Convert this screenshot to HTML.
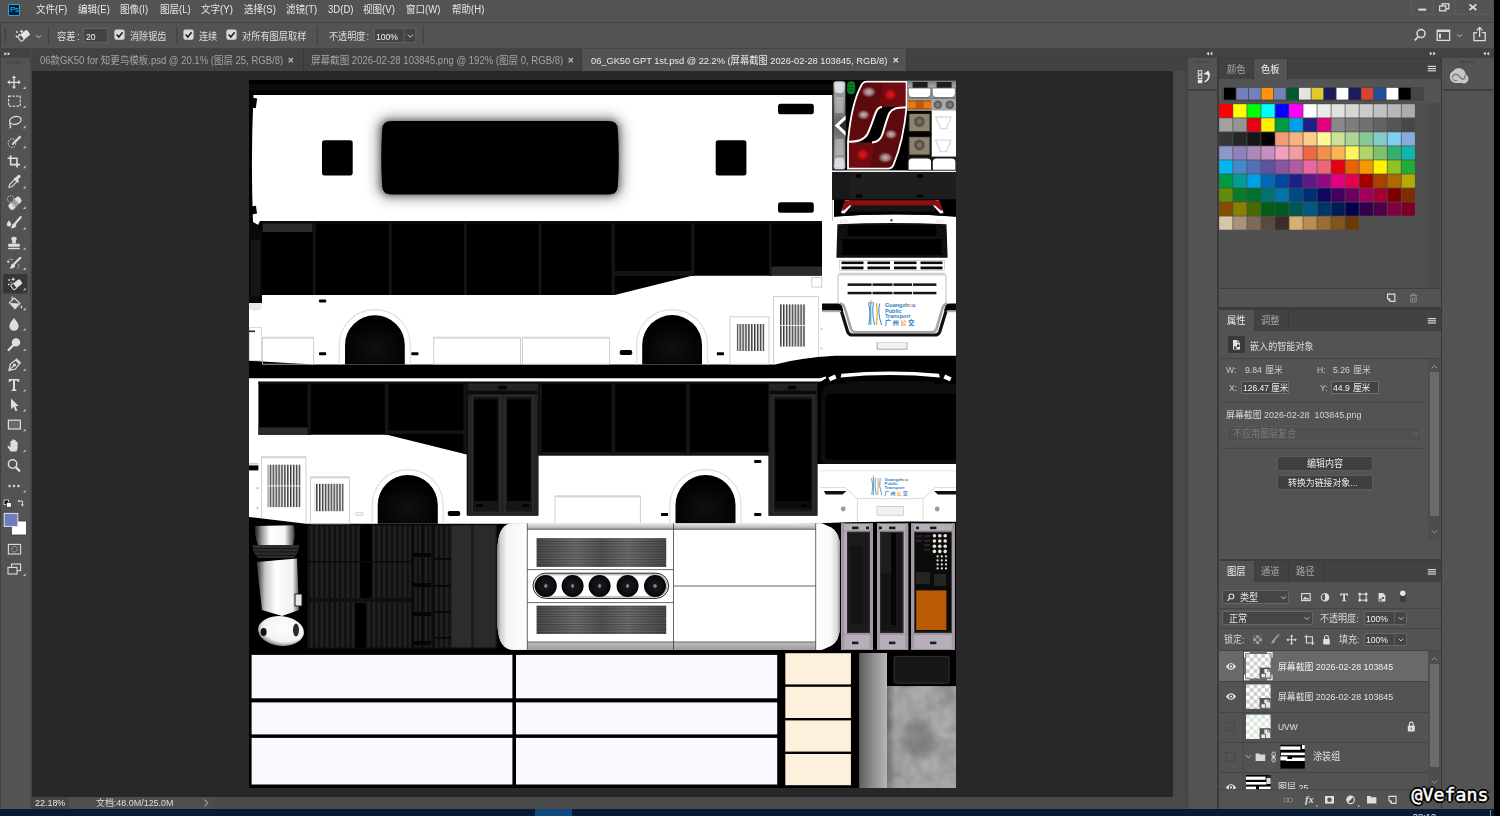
<!DOCTYPE html>
<html lang="zh-CN">
<head>
<meta charset="utf-8">
<title>Photoshop</title>
<style>
*{box-sizing:border-box;margin:0;padding:0}
html,body{width:1500px;height:816px;overflow:hidden;background:#535353}
body{position:relative;font-family:"Liberation Sans","Noto Sans CJK SC",sans-serif;font-size:10.5px;color:#dcdcdc;line-height:1}
.abs{position:absolute}
.t{position:absolute;white-space:pre;line-height:12px;height:12px}
/* ---------- top bars ---------- */
#menubar{left:0;top:0;width:1494px;height:22.7px;background:#535353;border-bottom:1px solid #424242}
#optbar{left:0;top:22.7px;width:1494px;height:25.9px;background:#535353;border-bottom:0.8px solid #444}
#menubar .t{top:4px;font-size:10.5px;color:#e4e4e4}
.sep{position:absolute;width:1px;background:#3c3c3c;top:27px;height:17px}
.cb{position:absolute;top:30px;width:10px;height:10px;background:#d6d6d6;border-radius:1.5px}
.cb svg{position:absolute;left:1px;top:1px}
.inp{position:absolute;background:#454545;border:1px solid #666;color:#f0f0f0}
/* ---------- tab bar ---------- */
#tabbar{left:32px;top:48.6px;width:1141px;height:22.6px;background:#424242}
.tab{position:absolute;top:0;height:22px;border-right:1px solid #383838;color:#9c9c9c}
.tab.on{background:#535353;color:#e6e6e6}
.tab .t{top:5px;font-size:10px}
/* ---------- toolbar ---------- */
#tools{left:0;top:48.6px;width:30px;height:760px;background:#535353}
#toolsdiv{left:30px;top:48.6px;width:2px;height:760px;background:#464646}
/* ---------- canvas ---------- */
#stage{left:32px;top:71.2px;width:1141px;height:725.4px;background:#282828}
#vscroll{left:1173px;top:71.2px;width:13px;height:725.4px;background:#494949}
#status{left:32px;top:796.6px;width:1154px;height:12.6px;background:#4a4a4a}
#taskbar{left:0;top:809px;width:1494px;height:7px;background:#051b38}
/* ---------- right dock ---------- */
#dockgap{left:1186px;top:48.6px;width:2px;height:760px;background:#434343}
#dockhead{left:1188px;top:48.6px;width:306px;height:9.4px;background:#424242}
#iconcol{left:1188px;top:58px;width:29px;height:751px;background:#535353}
#panelcol{left:1217px;top:58px;width:225px;height:751px;background:#3c3c3c}
#cccol{left:1440.5px;top:58px;width:53.5px;height:751px;background:#535353;border-left:1px solid #383838}
#rightedge{left:1494px;top:0;width:6px;height:816px;background:#000}
.panel{position:absolute;left:1219px;width:221px;background:#535353}
.ptabs{position:absolute;left:0;top:0;width:100%;height:21px;background:#424242}
.ptab{position:absolute;top:0;height:21px;color:#a8a8a8;font-size:10.5px}
.ptab.on{background:#535353;color:#f0f0f0}
.ptab span{position:absolute;top:5px;left:8px;white-space:nowrap;line-height:12px}
</style>
</head>
<body>
<!-- ============ MENU BAR ============ -->
<div id="menubar" class="abs"></div>
<!-- ============ OPTIONS BAR ============ -->
<div id="optbar" class="abs"></div>
<!-- ============ TOOLBAR ============ -->
<div id="tools" class="abs"></div>
<div id="toolsdiv" class="abs"></div>
<!-- ============ TAB BAR ============ -->
<div id="tabbar" class="abs"></div>
<!-- ============ CANVAS STAGE ============ -->
<div id="stage" class="abs"></div>
<div id="vscroll" class="abs"></div>
<div id="status" class="abs"></div>
<!-- ============ RIGHT DOCK ============ -->
<div id="dockgap" class="abs"></div>
<div id="dockhead" class="abs"></div>
<div id="iconcol" class="abs"></div>
<div id="panelcol" class="abs"></div>
<div id="cccol" class="abs"></div>
<div id="rightedge" class="abs"></div>
<div id="taskbar" class="abs"></div>
<div class="abs" style="left:0;top:22px;width:1px;height:787px;background:#404040"></div>
<svg class="abs" style="left:0;top:0" width="1500" height="816" viewBox="0 0 1500 816">
<defs>
  <filter id="b1" x="-10%" y="-20%" width="120%" height="140%"><feGaussianBlur stdDeviation="1.6"/></filter>
  <filter id="b05" x="-10%" y="-20%" width="120%" height="140%"><feGaussianBlur stdDeviation="0.6"/></filter>
  <filter id="b7" x="-20%" y="-40%" width="140%" height="180%"><feGaussianBlur stdDeviation="6.5"/></filter>
  <filter id="b3" x="-20%" y="-20%" width="140%" height="140%"><feGaussianBlur stdDeviation="3"/></filter>
  <filter id="conc" x="0" y="0" width="100%" height="100%">
    <feTurbulence type="fractalNoise" baseFrequency="0.045" numOctaves="3" seed="7" result="n"/>
    <feColorMatrix in="n" type="matrix" values="0 0 0 0 0.52  0 0 0 0 0.52  0 0 0 0 0.52  0.9 0.9 0 0 -0.55" result="m"/>
    <feComposite in="m" in2="SourceGraphic" operator="over"/>
  </filter>
  <linearGradient id="concL" x1="0" x2="1" y1="0" y2="0"><stop offset="0" stop-color="#000" stop-opacity="0.3"/><stop offset="1" stop-color="#000" stop-opacity="0"/></linearGradient>
  <linearGradient id="gcol" x1="0" x2="1" y1="0" y2="0">
    <stop offset="0" stop-color="#5e5e5e"/><stop offset="0.5" stop-color="#8e8e8e"/><stop offset="1" stop-color="#b6b6b6"/>
  </linearGradient>
  <linearGradient id="acL" x1="0" x2="1" y1="0" y2="0">
    <stop offset="0" stop-color="#888888"/><stop offset="0.1" stop-color="#cecece"/><stop offset="0.32" stop-color="#f4f4f4"/><stop offset="1" stop-color="#ffffff"/>
  </linearGradient>
  <linearGradient id="acR" x1="0" x2="1" y1="0" y2="0">
    <stop offset="0" stop-color="#ffffff"/><stop offset="0.6" stop-color="#f8f8f8"/><stop offset="0.88" stop-color="#d8d8d8"/><stop offset="1" stop-color="#909090"/>
  </linearGradient>
  <linearGradient id="acT" x1="0" x2="0" y1="0" y2="1">
    <stop offset="0" stop-color="#ececec"/><stop offset="1" stop-color="#a4a4a4"/>
  </linearGradient>
  <linearGradient id="acB" x1="0" x2="0" y1="0" y2="1">
    <stop offset="0" stop-color="#c0c0c0"/><stop offset="1" stop-color="#9c9c9c"/>
  </linearGradient>
  <linearGradient id="grl" x1="0" x2="1" y1="0" y2="0">
    <stop offset="0" stop-color="#4e4e4e"/><stop offset="0.12" stop-color="#5c5c5c"/><stop offset="0.3" stop-color="#727272"/><stop offset="0.5" stop-color="#585858"/><stop offset="0.7" stop-color="#727272"/><stop offset="0.88" stop-color="#5c5c5c"/><stop offset="1" stop-color="#4e4e4e"/>
  </linearGradient>
  <pattern id="hatch" width="10" height="2.6" patternUnits="userSpaceOnUse"><rect width="10" height="1.2" fill="#000" opacity="0.3"/></pattern>
  <pattern id="ribs" width="5.2" height="10" patternUnits="userSpaceOnUse" x="309"><rect width="5.2" height="10" fill="#101010"/><rect x="1.2" width="2.6" height="10" fill="#222222"/></pattern>
  <pattern id="bars" width="2.9" height="10" patternUnits="userSpaceOnUse"><rect width="2.9" height="10" fill="#fff"/><rect width="1.5" height="10" fill="#3a3a3a"/></pattern>
  <radialGradient id="fan"><stop offset="0" stop-color="#8a8a8a"/><stop offset="0.14" stop-color="#777"/><stop offset="0.18" stop-color="#16181d"/><stop offset="0.8" stop-color="#0b0c10"/><stop offset="1" stop-color="#000"/></radialGradient>
  <radialGradient id="arch" cx="0.5" cy="0.7" r="0.6"><stop offset="0" stop-color="#101010"/><stop offset="1" stop-color="#000"/></radialGradient>
</defs>
<!-- document black base -->
<rect x="249" y="80" width="707" height="708" fill="#000"/>
<!-- ROOF -->
<rect x="249" y="84" width="707" height="6" fill="#0b0b0b"/>
<path d="M253.5,95 L832.5,95 L832.5,221 L260,221 L258,225 L253,222 Q250.6,158 253.5,95 Z" fill="#fff"/>
<rect x="251.5" y="98" width="5" height="10" fill="#000" transform="rotate(8 254 103)"/>
<rect x="251.5" y="206" width="5" height="8" fill="#000" transform="rotate(-8 254 210)"/>
<rect x="376" y="116" width="247.5" height="83.5" rx="14" fill="#000" filter="url(#b7)" opacity="0.3"/>
<rect x="380" y="120" width="239.5" height="75.5" rx="10" fill="#000" filter="url(#b3)" opacity="0.45"/>
<path d="M391,121 L609,121 Q617.2,121 617.8,129 Q619.8,158 617.8,186.5 Q617.2,194.5 609,194.5 L391,194.5 Q382.8,194.5 382.2,186.5 Q380.2,158 382.2,129 Q382.8,121 391,121 Z" fill="#000" filter="url(#b05)"/>
<rect x="322" y="140.3" width="30.7" height="35.2" rx="2.5" fill="#000"/>
<rect x="715.7" y="140.3" width="30.7" height="35.2" rx="2.5" fill="#000"/>
<rect x="778" y="103.8" width="35.8" height="10.4" rx="2.5" fill="#000" filter="url(#b05)"/>
<rect x="778" y="202.3" width="35.8" height="10.4" rx="2.5" fill="#000" filter="url(#b05)"/>

<!-- SIDE 1 -->
<path d="M249,303 L262,303 L262,295 L614.7,295 L692,275.8 L822,275.8 L822,221 L832.5,221 L832.5,200 L834,200 L834,216.5 Q895,211.5 956,216.5 L956,355.8 L835,355.8 Q800,358 775,364.4 L313.5,364.4 L249,360.8 Z" fill="#fff"/>
<!-- window frame tints -->
<rect x="262" y="221" width="560" height="2.5" fill="#0d0d0d"/>
<rect x="262.5" y="223.5" width="50" height="8.5" fill="#2b2b2b"/>
<g fill="#141414">
<rect x="312.8" y="223" width="3" height="72"/><rect x="388.8" y="223" width="3" height="72"/><rect x="463.8" y="223" width="3" height="72"/><rect x="538.6" y="223" width="3" height="72"/><rect x="611.5" y="223" width="3.4" height="72"/><rect x="691" y="223" width="3.4" height="53"/><rect x="769" y="223" width="2.4" height="53"/>
<rect x="614" y="271" width="78" height="5"/>
</g>
<rect x="771.4" y="266.5" width="50.4" height="8.5" fill="#2b2b2b"/>
<path d="M249,222 L258,225 L261.8,232 L261.8,303 L249,303 Z" fill="#0a0a0a"/>
<path d="M251,240 L260,240 L260,296 L251,296 Z" fill="#161616"/>
<path d="M249,303 L261.5,303 L261.5,309 Q256,312 249,309 Z" fill="#e9e9e9"/>
<rect x="249.3" y="327.5" width="12" height="33" fill="none" stroke="#c9c9c9" stroke-width="0.7"/>
<rect x="249" y="330.5" width="6" height="1.6" fill="#222"/>
<!-- wheel arches -->
<path d="M339.3,364.4 L339.3,345 A35.5,35.5 0 0 1 410.3,345 L410.3,364.4" fill="none" stroke="#e2e2e2" stroke-width="1.3"/>
<path d="M345,364.4 L345,345 A29.9,29.9 0 0 1 404.8,345 L404.8,364.4 Z" fill="url(#arch)"/>
<path d="M636.6,364.4 L636.6,345 A35.5,35.5 0 0 1 707.6,345 L707.6,364.4" fill="none" stroke="#e2e2e2" stroke-width="1.3"/>
<path d="M642.2,364.4 L642.2,345 A29.9,29.9 0 0 1 702,345 L702,364.4 Z" fill="url(#arch)"/>
<!-- panel outlines -->
<g fill="none" stroke="#c4c4c4" stroke-width="0.8">
<rect x="262.4" y="337.2" width="51.3" height="27"/><rect x="433.8" y="337.2" width="86.8" height="27"/><rect x="522.6" y="337.2" width="86.8" height="27"/>
<rect x="730" y="316.8" width="39" height="47.4"/><path d="M773.6,364.4 L773.6,296.5 L818.6,296.5 L818.6,357"/>
<rect x="811.8" y="277.4" width="10" height="9.6"/>
</g>
<rect x="433.5" y="337" width="87" height="1.6" fill="#d8d8d8"/><rect x="522.4" y="337" width="87" height="1.6" fill="#d8d8d8"/><rect x="262.4" y="337" width="51.3" height="1.6" fill="#d8d8d8"/>
<!-- small marks -->
<g fill="#000"><rect x="319" y="299.6" width="7.2" height="3" rx="0.8"/><rect x="319" y="352.2" width="7.2" height="3" rx="0.8"/><rect x="411.3" y="352.2" width="7.2" height="3" rx="0.8"/><rect x="716.8" y="352.2" width="7.2" height="3" rx="0.8"/><rect x="619.8" y="350" width="12.4" height="5" rx="1.8"/></g>
<!-- grilles -->
<rect x="736.8" y="324" width="27.6" height="27" fill="url(#bars)"/>
<rect x="779.7" y="304.4" width="25.6" height="42.2" fill="url(#bars)"/>
<rect x="779.7" y="325" width="25.6" height="1" fill="#fff" opacity="0.8"/>
<circle cx="821.6" cy="329" r="1.1" fill="#ccc"/><circle cx="821.6" cy="348.5" r="1.1" fill="#ccc"/>

<!-- FRONT 1 -->
<rect x="832.2" y="172" width="123.8" height="27.6" fill="#1e1e1e"/>
<rect x="832.2" y="172" width="18" height="27.6" fill="#191919"/><rect x="856" y="174" width="5" height="3.5" fill="#000"/><rect x="917" y="174" width="6" height="3.5" fill="#000"/><rect x="856" y="194.5" width="6" height="3" fill="#000"/><rect x="917" y="194.5" width="6" height="3" fill="#000"/>
<rect x="834" y="199.6" width="122" height="15" fill="#000"/>
<path d="M834,216.8 Q895,211.3 956,216.8 L956,212 L834,212 Z" fill="#000"/>
<rect x="849" y="205.6" width="86" height="6" fill="#151515"/>
<path d="M845.5,200 L841,213 L844.5,213.4 L851.5,205.5 L849,200 Z" fill="#fff"/>
<path d="M938.5,200 L943.6,213 L940.2,213.4 L933,205.5 L936,200 Z" fill="#fff"/>
<path d="M844.6,200.3 L939.6,200.3 L942.6,210.5 L940.8,210.5 L935,205.4 L849.5,205.4 L844,210.5 L842,210.5 Z" fill="#8a0f12"/>
<!-- windshield -->
<path d="M837.4,224.2 Q892,221.6 946.5,224.2 L947.6,257.8 L836.4,257.8 Z" fill="#101010"/>
<rect x="847.8" y="225.2" width="88.4" height="10.8" fill="#000"/>
<rect x="842.3" y="239" width="99.3" height="16" fill="#000"/>
<circle cx="891.5" cy="220.2" r="1.3" fill="#555"/>
<rect x="840.5" y="220.5" width="6" height="2.4" fill="none" stroke="#d0d0d0" stroke-width="0.6" transform="rotate(-8 843 221)"/><rect x="937" y="220.5" width="6" height="2.4" fill="none" stroke="#d0d0d0" stroke-width="0.6" transform="rotate(8 940 221)"/>
<!-- grill -->
<g fill="#0c0c0c"><rect x="841.5" y="261.5" width="22" height="2.6"/><rect x="867.5" y="261.5" width="22.5" height="2.6"/><rect x="894" y="261.5" width="22.5" height="2.6"/><rect x="920.5" y="261.5" width="22" height="2.6"/>
<rect x="841.5" y="266.5" width="22" height="2.8"/><rect x="867.5" y="266.5" width="22.5" height="2.8"/><rect x="894" y="266.5" width="22.5" height="2.8"/><rect x="920.5" y="266.5" width="22" height="2.8"/></g>
<rect x="839.5" y="260.3" width="105" height="10.2" fill="none" stroke="#bbb" stroke-width="0.6"/>
<path d="M838,304 L838,276 Q838,273.4 841,273.4 L943,273.4 Q946,273.4 946,276 L946,304" fill="none" stroke="#bdbdbd" stroke-width="1"/>
<rect x="838.5" y="273.6" width="107" height="2" fill="#d5d5d5"/>
<g fill="#151515"><rect x="847.6" y="283.4" width="88.8" height="2.5"/><rect x="847.6" y="291.8" width="88.8" height="2.5"/></g>
<g fill="#fff"><rect x="871.6" y="283" width="0.9" height="12"/><rect x="892.5" y="283" width="0.9" height="12"/><rect x="912" y="283" width="0.9" height="12"/></g>
<!-- bumper swoosh -->
<path d="M839.6,303.6 Q843.6,304 844.8,308 L851,329 Q852,332.2 855.4,332.2 L932,332.2 Q935.4,332.2 936.4,329 L942.6,308 Q943.8,304 947.8,303.6" fill="none" stroke="#a4a4a4" stroke-width="2.6"/>
<path d="M822,307 L836.5,307 Q840,307 841.2,310.5 L847.6,331.4 Q848.8,335 852.8,335 L934.6,335 Q938.6,335 939.8,331.4 L946.2,310.5 Q947.4,307 951,307 L956,307" fill="none" stroke="#101010" stroke-width="3.2"/>
<path d="M822,303.6 L838,303.6 Q841.4,304 842.4,307.4 L843.4,310.6 L822,310.6 Z" fill="#050505"/>
<path d="M956,303.6 L949.4,303.6 Q946,304 945,307.4 L944,310.6 L956,310.6 Z" fill="#050505"/>
<rect x="822" y="310.6" width="19" height="1.6" fill="#b0b0b0"/><rect x="946.6" y="310.6" width="9.4" height="1.6" fill="#b0b0b0"/>
<!-- logo -->
<g>
<path d="M868.6,303.5 Q871,312 868.8,325 M870.8,302.5 L870.8,325 M873.4,303.5 Q871.6,312 874.6,325 M879.6,303.5 Q877.4,313 881.6,325" fill="none" stroke="#3d86c6" stroke-width="1"/>
<path d="M876.6,303.2 Q877.8,313 876.4,325" fill="none" stroke="#f0a030" stroke-width="1.2"/>
<circle cx="870.8" cy="300.8" r="0.9" fill="#f0a030"/><rect x="868" y="302.4" width="6" height="0.9" fill="#3d86c6"/>
<text font-family="'Liberation Sans','Noto Sans CJK SC',sans-serif" font-weight="bold" font-size="5.5" fill="#2f7dc2"><tspan x="885" y="307.2">Guangzh<tspan fill="#f0a030">o</tspan>u</tspan><tspan x="885" y="312.7">Public</tspan><tspan x="885" y="318.2">Transport</tspan></text>
<text font-family="'Noto Sans CJK SC',sans-serif" font-weight="bold" font-size="6.4" letter-spacing="1.3" x="884.8" y="325.4" fill="#2f7dc2">广州<tspan fill="#f0a030">公</tspan>交</text>
</g>
<!-- plate -->
<rect x="876.6" y="342" width="31" height="8" fill="#bdbdbd" filter="url(#b05)"/><rect x="878" y="342.4" width="28.4" height="6.2" fill="#f1f1f1"/>

<!-- SIDE 2 -->
<path d="M840.6,377.4 Q890,372.6 939.8,377.4 L939,373.8 Q890,369.2 841.4,373.8 Z" fill="#fff"/>
<path d="M828.4,377.4 L834.8,374.6 L836.6,378.4 L830.2,381.2 Z" fill="#fff"/><path d="M951.6,377.4 L945.2,374.6 L943.4,378.4 L949.8,381.2 Z" fill="#fff"/>
<path d="M249,378.2 L820,378.2 L825.6,376.4 L826.4,378 L821,381.6 L258.4,381.6 L258.4,434.8 L387,434.8 L466.7,454.6 L466.7,515.6 L538.5,515.6 L538.5,455.4 L768.6,455.4 L768.6,515.6 L817.4,515.6 L817.4,464 L956,464 L956,521.8 Q880,521 840,522.6 Q800,524.4 760,523.7 L306,523.7 L249,517 Z" fill="#fff"/>
<rect x="258.4" y="382" width="560" height="2.2" fill="#0d0d0d"/>
<rect x="258.4" y="427.4" width="50" height="7.4" fill="#2b2b2b"/>
<g fill="#141414">
<rect x="307.6" y="384" width="3.2" height="51"/><rect x="385" y="384" width="3.4" height="51"/><rect x="388" y="430.5" width="76" height="3.4"/><rect x="463.5" y="384" width="3.2" height="70"/>
<rect x="538.5" y="384" width="3.2" height="71"/><rect x="611.6" y="384" width="3.6" height="71"/><rect x="686.2" y="384" width="3.6" height="71"/>
<rect x="538.5" y="452" width="230" height="3.4"/>
</g>
<!-- door 1 -->
<rect x="467.6" y="383.4" width="70.4" height="132.4" fill="#232323"/>
<rect x="468" y="390.6" width="69" height="3.6" fill="#0a0a0a"/><rect x="498" y="385.8" width="9" height="3.6" rx="1.6" fill="#050505"/>
<rect x="471.6" y="395" width="28.8" height="118" fill="#2e2e2e"/><rect x="504.6" y="395" width="28.8" height="118" fill="#2e2e2e"/>
<rect x="473" y="396.6" width="26" height="115" fill="#161616"/><rect x="506" y="396.6" width="26" height="115" fill="#161616"/>
<rect x="474.4" y="399.4" width="23" height="101.6" fill="#000"/><rect x="507.4" y="399.4" width="23" height="101.6" fill="#000"/>
<rect x="476" y="504.2" width="7" height="2.6" fill="#000"/><rect x="522" y="504.2" width="7" height="2.6" fill="#000"/>
<!-- door 2 -->
<rect x="768.6" y="383.4" width="48.8" height="132.4" fill="#232323"/>
<rect x="769.5" y="390.6" width="47" height="3.4" fill="#0a0a0a"/><rect x="787.6" y="385.8" width="9" height="3.6" rx="1.6" fill="#050505"/>
<rect x="772.4" y="395" width="41.4" height="118" fill="#2e2e2e"/><rect x="773.8" y="396.6" width="38.6" height="115" fill="#161616"/>
<rect x="775.4" y="399.4" width="35.8" height="102" fill="#000"/><rect x="775.4" y="501.4" width="35.8" height="7" fill="#0b0b0b"/>
<rect x="800.6" y="504.2" width="6" height="2.6" fill="#000"/>
<!-- left details -->
<rect x="249" y="465.4" width="9.4" height="5" fill="#000"/><rect x="249" y="463.4" width="9.4" height="1" fill="#aaa"/>
<circle cx="257.6" cy="488.2" r="1.1" fill="#bbb"/><circle cx="257.6" cy="507.8" r="1.1" fill="#bbb"/>
<g fill="none" stroke="#c4c4c4" stroke-width="0.8">
<path d="M261.6,518.2 L261.6,456.8 L306,456.8 L306,523.4"/><rect x="310.6" y="477" width="39" height="47"/>
<path d="M555,523.7 L555,496 L640.4,496 L640.4,523.7"/>
<rect x="355.8" y="512.8" width="7" height="2.6" rx="0.6"/>
</g>
<rect x="261.6" y="456.4" width="44.4" height="1.8" fill="#d4d4d4"/><rect x="310.6" y="476.6" width="39" height="1.8" fill="#d4d4d4"/><rect x="555" y="495.6" width="85.4" height="1.8" fill="#d4d4d4"/>
<rect x="267.7" y="464.7" width="33" height="42.4" fill="url(#bars)"/><rect x="267.7" y="485.4" width="33" height="1" fill="#fff" opacity="0.8"/>
<rect x="314.8" y="483.8" width="28.8" height="27.4" fill="url(#bars)"/>
<!-- wheel arches -->
<path d="M372.2,523.7 L372.2,505 A35.5,35.5 0 0 1 443.2,505 L443.2,523.7" fill="none" stroke="#e2e2e2" stroke-width="1.3"/>
<path d="M377.7,523.7 L377.7,505 A30,30 0 0 1 437.8,505 L437.8,523.7 Z" fill="url(#arch)"/>
<path d="M670,523.7 L670,505 A35.5,35.5 0 0 1 741,505 L741,523.7" fill="none" stroke="#e2e2e2" stroke-width="1.3"/>
<path d="M675.5,523.7 L675.5,505 A30,30 0 0 1 735.5,505 L735.5,523.7 Z" fill="url(#arch)"/>
<g fill="#000"><rect x="447.8" y="511" width="12.4" height="5" rx="1.8"/><rect x="754.2" y="460" width="7.2" height="3" rx="0.8"/><rect x="661" y="513" width="7.2" height="3" rx="0.8"/><rect x="754.2" y="513" width="7.2" height="3" rx="0.8"/></g>

<!-- FRONT 2 -->
<path d="M821.4,395 Q822,386 830,384.2 L956,384.2 L956,464 L824,464 Q820.6,462 820.8,458 Z" fill="#0d0d0d"/>
<path d="M825.4,398 Q826,394 830,394 L956,394 L956,459.6 L829,459.6 Q825,459.6 825,455.6 Z" fill="#000"/>
<rect x="845.6" y="381.2" width="89" height="10.4" fill="#0d0d0d"/>
<path d="M819,470.8 L956,470.8" stroke="#e6e6e6" stroke-width="1"/>
<path d="M820,487.6 L845.5,487.6 L857.4,498.4 L857.4,521.8 M956,487.6 L935,487.6 L923,498.4 L923,521.8 M857.4,498.6 L923,498.6" fill="none" stroke="#cfcfcf" stroke-width="0.8"/>
<path d="M824,491 L846.4,491 L842.6,494.4 L825.6,494.4 Z" fill="#111"/><path d="M956,491 L934,491 L937.8,494.4 L956,494.4 Z" fill="#111"/>
<circle cx="843.2" cy="509" r="2.4" fill="#9a9a9a"/><circle cx="937.2" cy="509" r="2.4" fill="#9a9a9a"/>
<rect x="877" y="506.6" width="26.4" height="8.6" fill="#f1f1f1" stroke="#bfbfbf" stroke-width="0.7"/>
<g>
<path d="M871.6,478 Q873.6,485 871.8,495 M873.4,477 L873.4,495 M875.4,478 Q874,485 876.4,495 M880.2,478 Q878.4,486 881.8,495" fill="none" stroke="#3d86c6" stroke-width="0.8"/>
<path d="M877.8,477.8 Q878.8,486 877.6,495" fill="none" stroke="#f0a030" stroke-width="0.9"/><circle cx="873.4" cy="476" r="0.7" fill="#f0a030"/>
<text font-family="'Liberation Sans','Noto Sans CJK SC',sans-serif" font-weight="bold" font-size="4.3" fill="#2f7dc2"><tspan x="884.6" y="481.2">Guangzh<tspan fill="#f0a030">o</tspan>u</tspan><tspan x="884.6" y="485.2">Public</tspan><tspan x="884.6" y="489.2">Transport</tspan></text>
<text font-family="'Noto Sans CJK SC',sans-serif" font-weight="bold" font-size="5" letter-spacing="1.1" x="884.4" y="495" fill="#2f7dc2">广州<tspan fill="#f0a030">公</tspan>交</text>
</g>

<!-- ROW 3 -->
<!-- mirror / exhaust object -->
<defs>
<linearGradient id="cyl" x1="0" x2="1" y1="0" y2="0"><stop offset="0" stop-color="#1a1a1a"/><stop offset="0.18" stop-color="#9a9a9a"/><stop offset="0.38" stop-color="#ffffff"/><stop offset="0.75" stop-color="#f4f4f4"/><stop offset="1" stop-color="#3a3a3a"/></linearGradient>
<linearGradient id="cyl2" x1="0" x2="1" y1="0" y2="0"><stop offset="0" stop-color="#2a2a2a"/><stop offset="0.2" stop-color="#c8c8c8"/><stop offset="0.45" stop-color="#ffffff"/><stop offset="0.85" stop-color="#f0f0f0"/><stop offset="1" stop-color="#5a5a5a"/></linearGradient>
<radialGradient id="egg" cx="0.55" cy="0.4" r="0.65"><stop offset="0" stop-color="#fff"/><stop offset="0.7" stop-color="#f2f2f2"/><stop offset="1" stop-color="#6a6a6a"/></radialGradient>
</defs>
<path d="M255,526 L293.6,525.2 Q296,535 293,545 L258,545 Q254,535 255,526 Z" fill="url(#cyl)"/>
<path d="M252.6,545 L299,545 Q299.6,552 294,558 L258,558 Q252,552 252.6,545 Z" fill="#2c2c2c"/>
<rect x="253" y="548" width="45.6" height="1" fill="#151515"/><rect x="254" y="551.4" width="43.6" height="1" fill="#151515"/><rect x="256" y="554.8" width="39.6" height="1" fill="#151515"/>
<path d="M256.6,562 L297,558.6 L299,610 L282,616 L262,610 Z" fill="url(#cyl2)"/>
<rect x="295" y="594" width="7" height="12" fill="#e8e8e8" stroke="#1a1a1a" stroke-width="1"/>
<ellipse cx="281" cy="631" rx="23" ry="14.8" fill="url(#egg)" transform="rotate(6 281 631)"/>
<ellipse cx="263.6" cy="632" rx="3" ry="4" fill="#111"/><ellipse cx="296" cy="630" rx="3" ry="6.4" fill="#2a2a2a"/>
<!-- ribbed dark panels -->
<rect x="307.4" y="524.6" width="190" height="124" fill="#121212"/>
<rect x="308.6" y="526" width="143.4" height="121" fill="url(#ribs)"/>
<rect x="360.2" y="525" width="11.8" height="73" rx="3" fill="#000"/><rect x="355" y="603" width="11" height="45" rx="2" fill="#000"/>
<rect x="308" y="561" width="103" height="1.4" fill="#0a0a0a"/><rect x="308" y="598" width="103" height="4" fill="#101010"/>
<rect x="411" y="525" width="3.4" height="124" fill="#0c0c0c"/><rect x="421" y="525" width="3.4" height="124" fill="#0c0c0c"/><rect x="431.4" y="525" width="3.6" height="124" fill="#0c0c0c"/>
<g fill="#050505"><rect x="413" y="553" width="18" height="4"/><rect x="413" y="583" width="18" height="4"/><rect x="413" y="612" width="18" height="4"/><rect x="413" y="641" width="18" height="4"/><rect x="434" y="558" width="17" height="1.6"/><rect x="434" y="585" width="17" height="1.6"/><rect x="434" y="611" width="17" height="1.6"/><rect x="434" y="637" width="17" height="1.6"/></g>
<rect x="452" y="525.4" width="19.6" height="122" fill="#2c2c2c"/><rect x="474" y="525.4" width="21.6" height="122" fill="#2a2a2a"/><rect x="471.6" y="525.4" width="2.4" height="122" fill="#1c1c1c"/>
<!-- AC unit -->
<path d="M513,523.4 L822,523.4 L831,527.4 Q839.6,532 840,546 L840,627 Q839.6,641 831,645.8 L822,649.8 L513,649.8 C502,649.2 497.6,640 497.4,622 L497.4,551 C497.6,533 502,524 513,523.4 Z" fill="#fff"/>
<path d="M513,523.4 L527.3,523.4 L527.3,649.8 L513,649.8 C502,649.2 497.6,640 497.4,622 L497.4,551 C497.6,533 502,524 513,523.4 Z" fill="url(#acL)"/>
<path d="M815.7,523.4 L822,523.4 L831,527.4 Q839.6,532 840,546 L840,627 Q839.6,641 831,645.8 L822,649.8 L815.7,649.8 Z" fill="url(#acR)"/>
<rect x="527.3" y="523.4" width="288.4" height="5.8" fill="url(#acT)"/><rect x="527.3" y="642" width="288.4" height="7.8" fill="url(#acB)"/><rect x="527.3" y="528.8" width="288.4" height="0.8" fill="#4c4c4c"/><rect x="527.3" y="641.6" width="288.4" height="0.8" fill="#4c4c4c"/>
<g stroke="#2a2a2a" stroke-width="0.7" fill="none"><path d="M527.3,523.4 V649.8 M673.5,523.4 V649.8 M815.7,523.4 V649.8 M673.5,586 H815.7 M527.3,569.6 H673.5 M527.3,602.6 H673.5"/></g>
<rect x="536.6" y="538.2" width="129.6" height="28.8" fill="url(#grl)"/><rect x="536.6" y="605.6" width="129.6" height="28.4" fill="url(#grl)"/><rect x="536.6" y="538.2" width="129.6" height="28.8" fill="url(#hatch)"/><rect x="536.6" y="605.6" width="129.6" height="28.4" fill="url(#hatch)"/>
<rect x="533" y="573.2" width="135.6" height="25.2" rx="12.6" fill="#fff" stroke="#1c1c1c" stroke-width="1"/>
<rect x="534.6" y="574.8" width="132.4" height="22" rx="11" fill="none" stroke="#555" stroke-width="0.5"/>
<g><circle cx="545.8" cy="586" r="11" fill="url(#fan)"/><circle cx="572.6" cy="586" r="11" fill="url(#fan)"/><circle cx="599.6" cy="586" r="11" fill="url(#fan)"/><circle cx="627.6" cy="586" r="11" fill="url(#fan)"/><circle cx="655" cy="586" r="11" fill="url(#fan)"/></g>
<!-- door panels -->
<g>
<rect x="841" y="523.4" width="32" height="126.4" fill="#b6aeb8"/><rect x="877" y="523.4" width="31.2" height="126.4" fill="#b6aeb8"/><rect x="911.2" y="523.4" width="43.6" height="126.4" fill="#b6aeb8"/>
<rect x="841" y="523.4" width="3.4" height="126.4" fill="#a299a4"/><rect x="869.6" y="523.4" width="3.4" height="126.4" fill="#a299a4"/><rect x="877" y="523.4" width="3" height="126.4" fill="#a299a4"/><rect x="905.2" y="523.4" width="3" height="126.4" fill="#a299a4"/><rect x="911.2" y="523.4" width="3" height="126.4" fill="#a299a4"/><rect x="951.8" y="523.4" width="3" height="126.4" fill="#a299a4"/>
<rect x="847" y="531.6" width="23" height="101.6" fill="#2a2a2c"/><rect x="848.2" y="533" width="20.6" height="98.6" fill="#1b1b1b"/><rect x="850" y="546" width="13" height="78" fill="#141414"/>
<rect x="880" y="531.6" width="23.6" height="101.6" fill="#2a2a2c"/><rect x="881" y="533" width="21" height="98.6" fill="#141414"/><rect x="881" y="533" width="10" height="40" fill="#1d1d1d"/><rect x="891" y="533" width="5" height="92" fill="#050505"/><rect x="896" y="533" width="6" height="98" fill="#161616"/>
<rect x="914.2" y="531.6" width="37.6" height="101.6" fill="#2a2a2c"/><rect x="915" y="533" width="36" height="98.6" fill="#0b0b0b"/>
<rect x="916.2" y="590.4" width="30.2" height="39.6" fill="#ba5a04"/>
<g fill="#e8e4d8"><circle cx="934.4" cy="535.8" r="1.8"/><circle cx="939.8" cy="535.8" r="1.8"/><circle cx="945.2" cy="535.8" r="1.8"/><circle cx="934.4" cy="541" r="1.8"/><circle cx="939.8" cy="541" r="1.8"/><circle cx="945.2" cy="541" r="1.8"/><circle cx="934.4" cy="546.2" r="1.8"/><circle cx="939.8" cy="546.2" r="1.8"/><circle cx="945.2" cy="546.2" r="1.8"/><circle cx="934.4" cy="551.4" r="1.8"/><circle cx="939.8" cy="551.4" r="1.8"/><circle cx="945.2" cy="551.4" r="1.8"/>
<circle cx="937.6" cy="556.4" r="1.1"/><circle cx="941.8" cy="556.4" r="1.1"/><circle cx="946" cy="556.4" r="1.1"/><circle cx="937.6" cy="560.4" r="1.1"/><circle cx="941.8" cy="560.4" r="1.1"/><circle cx="946" cy="560.4" r="1.1"/><circle cx="937.6" cy="564.4" r="1.1"/><circle cx="941.8" cy="564.4" r="1.1"/><circle cx="946" cy="564.4" r="1.1"/><circle cx="937.6" cy="568.4" r="1.1"/><circle cx="941.8" cy="568.4" r="1.1"/><circle cx="946" cy="568.4" r="1.1"/></g>
<g fill="#242424"><rect x="916" y="535" width="6" height="2.4"/><rect x="924" y="535" width="6" height="2.4"/><rect x="916" y="539.6" width="6" height="2.4"/><rect x="924" y="539.6" width="6" height="2.4"/><rect x="924" y="544" width="6" height="2.4"/><rect x="924" y="548.6" width="6" height="2.4"/><rect x="916" y="572" width="14" height="12"/><rect x="934" y="574" width="12" height="12"/></g>
<g fill="#1a1a1a"><rect x="852" y="526.6" width="6.4" height="2.6"/><rect x="866" y="526.6" width="3" height="2.6"/><rect x="879" y="526.6" width="3" height="2.6"/><rect x="889" y="526.6" width="6.4" height="2.6"/><rect x="916" y="526.6" width="3" height="2.6"/><rect x="930" y="526.6" width="6.4" height="2.6"/>
<rect x="852" y="641.6" width="6.4" height="2.6"/><rect x="889" y="641.6" width="6.4" height="2.6"/><rect x="930" y="641.6" width="6.4" height="2.6"/></g>
<g stroke="#8e8490" stroke-width="0.6"><path d="M841,530.8 H873 M877,530.8 H908.2 M911.2,530.8 H954.8 M841,634.4 H873 M877,634.4 H908.2 M911.2,634.4 H954.8"/></g>
</g>

<!-- ROW 4 -->
<g fill="#faf9ff">
<rect x="251.6" y="654.9" width="260.8" height="43.4"/><rect x="251.6" y="702.4" width="260.8" height="32"/><rect x="251.6" y="737.9" width="260.8" height="46.6"/>
<rect x="516" y="654.9" width="261.2" height="43.4"/><rect x="516" y="702.4" width="261.2" height="32"/><rect x="516" y="737.9" width="261.2" height="46.6"/>
</g>
<g fill="#fdf0dd">
<rect x="785.3" y="653.2" width="65.6" height="31.2"/><rect x="785.3" y="686.8" width="65.6" height="31.2"/><rect x="785.3" y="720.4" width="65.6" height="31.2"/><rect x="785.3" y="754" width="65.6" height="31.2"/>
</g>
<rect x="859.2" y="653" width="27.8" height="135" fill="url(#gcol)"/>
<rect x="894" y="656.4" width="55.2" height="26.8" rx="1.6" fill="#171717" stroke="#3c3c3c" stroke-width="0.8"/>
<rect x="887" y="686.4" width="69" height="101.6" fill="#8c8c8c"/>
<rect x="887" y="686.4" width="69" height="101.6" fill="#8c8c8c" filter="url(#conc)"/>
<rect x="887" y="686.4" width="8" height="101.6" fill="url(#concL)"/><ellipse cx="918" cy="738" rx="16" ry="20" fill="#000" opacity="0.14" filter="url(#b3)"/>

<!-- LIGHTS -->
<defs>
<linearGradient id="strip" x1="0" x2="0" y1="0" y2="1"><stop offset="0" stop-color="#dcdce6"/><stop offset="0.12" stop-color="#9a9a9e"/><stop offset="0.3" stop-color="#868686"/><stop offset="0.5" stop-color="#5e5e5e"/><stop offset="0.7" stop-color="#868686"/><stop offset="0.88" stop-color="#9a9a9e"/><stop offset="1" stop-color="#dcdce6"/></linearGradient>
<radialGradient id="redl"><stop offset="0" stop-color="#e81418"/><stop offset="0.4" stop-color="#c01016"/><stop offset="0.75" stop-color="#7c0c12"/><stop offset="1" stop-color="#5c0a0e" stop-opacity="0"/></radialGradient>
<radialGradient id="refl"><stop offset="0" stop-color="#c8bcbc"/><stop offset="0.55" stop-color="#a48a8c" stop-opacity="0.8"/><stop offset="1" stop-color="#7a2a30" stop-opacity="0"/></radialGradient>
<linearGradient id="lampbg" x1="0" x2="0" y1="0" y2="1"><stop offset="0" stop-color="#777"/><stop offset="0.5" stop-color="#b8b8b8"/><stop offset="1" stop-color="#8a8a8a"/></linearGradient>
<clipPath id="tlclip"><path d="M848,168.6 L848,141 Q851.5,103 861.5,85 Q863,81.6 867,81.6 L906.6,81.6 L906.6,107 Q903.4,141 893.6,164.6 Q892,168.6 888,168.6 Z"/></clipPath>
</defs>
<rect x="832.6" y="80.4" width="123.4" height="90" fill="#000"/>
<rect x="832.2" y="170.4" width="123.8" height="1.6" fill="#f4f4f4"/>
<!-- left strip -->
<rect x="833.2" y="81" width="12.4" height="88.8" rx="3" fill="url(#strip)" stroke="#2a2a2a" stroke-width="0.8"/>
<rect x="835" y="83" width="8.8" height="10" rx="2.4" fill="#e6e6ee" opacity="0.8"/><rect x="835" y="157.6" width="8.8" height="10" rx="2.4" fill="#e6e6ee" opacity="0.8"/>
<rect x="835.4" y="97" width="8" height="16" fill="#c8c8c8" opacity="0.55"/><rect x="835.4" y="139" width="8" height="16" fill="#c8c8c8" opacity="0.55"/>
<path d="M845.6,115.6 L834.6,125.6 L845.6,135.8 L845.6,131.6 L839.4,125.6 L845.6,119.8 Z" fill="#fff"/>
<path d="M845.6,119.8 L839.4,125.6 L845.6,131.6 Z" fill="#2c2c2c"/>
<!-- green -->
<rect x="847.2" y="81.2" width="8" height="13" rx="3.6" fill="#0a7d24"/>
<rect x="848.2" y="84" width="6" height="1" fill="#076018"/><rect x="848.2" y="87" width="6" height="1" fill="#076018"/><rect x="848.2" y="90" width="6" height="1" fill="#076018"/>
<!-- tail lights -->
<g clip-path="url(#tlclip)">
<rect x="846" y="80" width="62" height="90" fill="#5c0a0e"/>
<path d="M884,80 L908,80 L908,108 L878.4,108 Z" fill="#700c11"/>
<path d="M846,141 L874,141 L870.6,170 L846,170 Z" fill="#700c11"/>
<circle cx="890.4" cy="94.6" r="7.6" fill="url(#redl)"/><circle cx="862.8" cy="154.6" r="7.6" fill="url(#redl)"/>
<ellipse cx="868.8" cy="92" rx="8" ry="6" fill="url(#refl)"/><ellipse cx="863.6" cy="114.8" rx="7" ry="5.4" fill="url(#refl)"/>
<ellipse cx="891" cy="134.4" rx="7" ry="5.4" fill="url(#refl)"/><ellipse cx="885.4" cy="157.6" rx="8" ry="6" fill="url(#refl)"/>
<path d="M846,141.6 C858,142 864,140 867.5,134 C871,127 873.5,118 876,112 C877.5,108.4 879,107.2 882,107 L908,106.4 L908,107.2 C896,107.4 892,108.6 889.5,113 C887,118 885,126 882.5,134 C880.5,140.5 877,142.2 872,142.6 L846,142.6 Z" fill="#000"/>
<path d="M846,141.6 C858,142 864,140 867.5,134 C871,127 873.5,118 876,112 C877.5,108.4 879,107.2 882,107" fill="none" stroke="#fff" stroke-width="2"/>
<path d="M872,142.4 C877,142.2 880.5,140.5 882.5,134 C885,126 887,118 889.5,113 C892,108.6 896,107.4 908,107.2" fill="none" stroke="#fff" stroke-width="2"/>
</g>
<path d="M848,168.6 L848,141 Q851.5,103 861.5,85 Q863,81.6 867,81.6 L906.6,81.6 L906.6,107 Q903.4,141 893.6,164.6 Q892,168.6 888,168.6 Z" fill="none" stroke="#fff" stroke-width="1.8"/>
<!-- right cluster -->
<rect x="907.4" y="80.4" width="48.6" height="18.4" fill="url(#lampbg)"/>
<rect x="912.6" y="82" width="15" height="5.8" fill="#1c1c1c"/><rect x="936.6" y="82" width="15" height="5.8" fill="#1c1c1c"/>
<path d="M908.2,88 L930.8,88 L930.8,93 Q930.8,97.6 926,97.6 L913,97.6 Q908.2,97.6 908.2,93 Z" fill="#fff" stroke="#4a4a4a" stroke-width="0.7"/>
<path d="M932.2,88 L955.4,88 L955.4,93 Q955.4,97.6 950.6,97.6 L937,97.6 Q932.2,97.6 932.2,93 Z" fill="#fff" stroke="#4a4a4a" stroke-width="0.7"/>
<rect x="907.4" y="98.8" width="48.6" height="12" fill="#a8a8a8"/>
<rect x="907.8" y="100.4" width="23.6" height="9" fill="#e07a1c"/><rect x="915.6" y="101" width="8" height="7.8" fill="#b85a12"/><rect x="907.8" y="100.4" width="23.6" height="1" fill="#8a4a10"/><rect x="907.8" y="108.4" width="23.6" height="1" fill="#8a4a10"/>
<circle cx="937.8" cy="104.8" r="4.2" fill="#5c5c5c"/><circle cx="949.8" cy="104.8" r="4.2" fill="#5c5c5c"/><circle cx="937.8" cy="104.8" r="2.4" fill="#7a7a7a"/><circle cx="949.8" cy="104.8" r="2.4" fill="#7a7a7a"/>
<rect x="931.6" y="110.4" width="24.4" height="47.4" fill="#fff"/>
<rect x="907.8" y="112.4" width="23.4" height="20.4" fill="#14120e"/><rect x="909.4" y="114" width="20.2" height="17" fill="#8a8470"/><circle cx="919.4" cy="121.6" r="5.4" fill="#5e5248"/><circle cx="919.4" cy="121.6" r="2.4" fill="#7e7268"/>
<rect x="907.8" y="135.6" width="23.4" height="20.8" fill="#14120e"/><rect x="909.4" y="137.2" width="20.2" height="17.4" fill="#8a8470"/><circle cx="919.4" cy="145" r="5.4" fill="#5e5248"/><circle cx="919.4" cy="145" r="2.4" fill="#7e7268"/>
<rect x="907.4" y="132.8" width="24" height="2.8" fill="#000"/>
<path d="M935.8,117 L951,117 L949.6,121.6 Q947.4,123.4 946.8,128.6 L940.2,128.6 Q939.4,123.4 937.2,121.6 Z" fill="#fff" stroke="#dadada" stroke-width="1.3"/>
<path d="M935.8,140.2 L951,140.2 L949.6,144.8 Q947.4,146.6 946.8,151.6 L940.2,151.6 Q939.4,146.6 937.2,144.8 Z" fill="#fff" stroke="#dadada" stroke-width="1.3"/>
<rect x="907.4" y="156.6" width="48.6" height="13.8" fill="#1a1a1a"/>
<path d="M908.6,162 Q908.6,158.4 912,158.4 L927.6,158.4 Q931,158.4 931,162 L931,169.8 L908.6,169.8 Z" fill="#fff"/>
<path d="M932.8,162 Q932.8,158.4 936.2,158.4 L952,158.4 Q955.4,158.4 955.4,162 L955.4,169.8 L932.8,169.8 Z" fill="#fff"/>

</svg>

<svg class="abs" style="left:1188px;top:49px" width="305" height="45" viewBox="1188 49 305 45">
<g fill="#d8d8d8"><path d="M1209,51.8 L1206.4,53.6 L1209,55.4 Z M1212.4,51.8 L1209.8,53.6 L1212.4,55.4 Z"/>
<path d="M1429.8,51.8 L1432.4,53.6 L1429.8,55.4 Z M1433.2,51.8 L1435.8,53.6 L1433.2,55.4 Z"/>
<path d="M1485.8,51.8 L1483.2,53.6 L1485.8,55.4 Z M1489.2,51.8 L1486.6,53.6 L1489.2,55.4 Z"/></g>
<g fill="#444"><rect x="1195.4" y="60.6" width="1.2" height="2.4"/><rect x="1197.6" y="60.6" width="1.2" height="2.4"/><rect x="1199.8" y="60.6" width="1.2" height="2.4"/><rect x="1202.0" y="60.6" width="1.2" height="2.4"/><rect x="1204.2" y="60.6" width="1.2" height="2.4"/><rect x="1206.4" y="60.6" width="1.2" height="2.4"/><rect x="1208.6" y="60.6" width="1.2" height="2.4"/><rect x="1460.6" y="60.6" width="1.2" height="2.4"/><rect x="1462.8" y="60.6" width="1.2" height="2.4"/><rect x="1465.0" y="60.6" width="1.2" height="2.4"/><rect x="1467.2" y="60.6" width="1.2" height="2.4"/><rect x="1469.4" y="60.6" width="1.2" height="2.4"/><rect x="1471.6" y="60.6" width="1.2" height="2.4"/><rect x="1473.8" y="60.6" width="1.2" height="2.4"/></g>
<g fill="none" stroke="#e4e4e4" stroke-width="1"><rect x="1198.3" y="70.7" width="3.5" height="3.3"/><rect x="1198.3" y="75.2" width="3.5" height="3.3"/></g><rect x="1197.8" y="79.6" width="4.5" height="3.6" fill="#e4e4e4"/>
<path d="M1204.6,81.8 Q1210,79.8 1208.6,73" fill="none" stroke="#e4e4e4" stroke-width="1.7"/><path d="M1203.4,74 L1208.4,70.4 L1210.2,75.6 Z" fill="#e4e4e4"/>
<rect x="1188" y="89" width="29" height="1.6" fill="#3c3c3c"/><rect x="1443" y="89" width="50" height="1.6" fill="#3c3c3c"/>
<path d="M1455.6,83 a6.4,6.4 0 0 1 -2.4,-12 a7,7 0 0 1 12.6,3.4 a4.6,4.6 0 0 1 -4,8.6 Z" fill="#c6c6c6"/>
<path d="M1452.4,77.4 a3.4,3.4 0 0 1 5.6,-2.2 l4,3.8 a2.6,2.6 0 0 0 2.6,-4.2" fill="none" stroke="#6a6a6a" stroke-width="1.1"/><path d="M1452.6,78.6 a3.2,3.2 0 0 0 4.6,1.6" fill="none" stroke="#6a6a6a" stroke-width="1"/>
</svg>
<div class="abs" style="left:1219px;top:58.6px;width:221.5px;height:21px;background:#424242;"></div>
<div class="abs" style="left:1253px;top:58.6px;width:34px;height:21px;background:#535353;"></div>
<span class="t" style="left:1227px;top:63.7px;font-size:10.00px;color:#a6a6a6;transform:scaleX(0.93);transform-origin:0 50%;">颜色</span>
<span class="t" style="left:1261px;top:63.7px;font-size:10.00px;color:#f0f0f0;transform:scaleX(0.93);transform-origin:0 50%;">色板</span>
<div class="abs" style="left:1219px;top:79.4px;width:221.5px;height:228px;background:#535353;"></div>
<div class="abs" style="left:1222.4px;top:86.6px;width:201.8px;height:14.2px;background:#464646;"></div>
<div class="abs" style="left:1219px;top:103.2px;width:208.7px;height:184.8px;background:#4f4f4f;"></div>
<div class="abs" style="left:1427.7px;top:103.2px;width:12.8px;height:184.8px;background:#4b4b4b;"></div>
<svg class="abs" style="left:1219px;top:80px" width="222" height="160" viewBox="1219 80 222 160" shape-rendering="geometricPrecision"><rect x="1224.00" y="87.8" width="11.7" height="11.8" fill="#000000"/><rect x="1236.50" y="87.8" width="11.7" height="11.8" fill="#7480b8"/><rect x="1249.00" y="87.8" width="11.7" height="11.8" fill="#7480b8"/><rect x="1261.50" y="87.8" width="11.7" height="11.8" fill="#ff9410"/><rect x="1274.00" y="87.8" width="11.7" height="11.8" fill="#7480b8"/><rect x="1286.50" y="87.8" width="11.7" height="11.8" fill="#005a34"/><rect x="1299.00" y="87.8" width="11.7" height="11.8" fill="#e4e4e4"/><rect x="1311.50" y="87.8" width="11.7" height="11.8" fill="#e0c830"/><rect x="1324.00" y="87.8" width="11.7" height="11.8" fill="#1c1c5c"/><rect x="1336.50" y="87.8" width="11.7" height="11.8" fill="#ffffff"/><rect x="1349.00" y="87.8" width="11.7" height="11.8" fill="#1c1c5c"/><rect x="1361.50" y="87.8" width="11.7" height="11.8" fill="#d84434"/><rect x="1374.00" y="87.8" width="11.7" height="11.8" fill="#20509c"/><rect x="1386.50" y="87.8" width="11.7" height="11.8" fill="#ffffff"/><rect x="1399.00" y="87.8" width="11.7" height="11.8" fill="#000000"/><rect x="1219.20" y="104.20" width="13.3" height="13.3" fill="#ff0000"/><rect x="1233.23" y="104.20" width="13.3" height="13.3" fill="#ffff00"/><rect x="1247.26" y="104.20" width="13.3" height="13.3" fill="#00ff00"/><rect x="1261.29" y="104.20" width="13.3" height="13.3" fill="#00ffff"/><rect x="1275.32" y="104.20" width="13.3" height="13.3" fill="#0000ff"/><rect x="1289.35" y="104.20" width="13.3" height="13.3" fill="#ff00ff"/><rect x="1303.38" y="104.20" width="13.3" height="13.3" fill="#ffffff"/><rect x="1317.41" y="104.20" width="13.3" height="13.3" fill="#ebebeb"/><rect x="1331.44" y="104.20" width="13.3" height="13.3" fill="#e1e1e1"/><rect x="1345.47" y="104.20" width="13.3" height="13.3" fill="#d7d7d7"/><rect x="1359.50" y="104.20" width="13.3" height="13.3" fill="#cccccc"/><rect x="1373.53" y="104.20" width="13.3" height="13.3" fill="#c2c2c2"/><rect x="1387.56" y="104.20" width="13.3" height="13.3" fill="#b7b7b7"/><rect x="1401.59" y="104.20" width="13.3" height="13.3" fill="#acacac"/><rect x="1219.20" y="118.23" width="13.3" height="13.3" fill="#a1a1a1"/><rect x="1233.23" y="118.23" width="13.3" height="13.3" fill="#959595"/><rect x="1247.26" y="118.23" width="13.3" height="13.3" fill="#e60012"/><rect x="1261.29" y="118.23" width="13.3" height="13.3" fill="#fff100"/><rect x="1275.32" y="118.23" width="13.3" height="13.3" fill="#009944"/><rect x="1289.35" y="118.23" width="13.3" height="13.3" fill="#00a0e9"/><rect x="1303.38" y="118.23" width="13.3" height="13.3" fill="#1d2088"/><rect x="1317.41" y="118.23" width="13.3" height="13.3" fill="#e4007f"/><rect x="1331.44" y="118.23" width="13.3" height="13.3" fill="#898989"/><rect x="1345.47" y="118.23" width="13.3" height="13.3" fill="#7d7d7d"/><rect x="1359.50" y="118.23" width="13.3" height="13.3" fill="#707070"/><rect x="1373.53" y="118.23" width="13.3" height="13.3" fill="#626262"/><rect x="1387.56" y="118.23" width="13.3" height="13.3" fill="#555555"/><rect x="1401.59" y="118.23" width="13.3" height="13.3" fill="#484848"/><rect x="1219.20" y="132.26" width="13.3" height="13.3" fill="#363636"/><rect x="1233.23" y="132.26" width="13.3" height="13.3" fill="#262626"/><rect x="1247.26" y="132.26" width="13.3" height="13.3" fill="#161616"/><rect x="1261.29" y="132.26" width="13.3" height="13.3" fill="#000000"/><rect x="1275.32" y="132.26" width="13.3" height="13.3" fill="#f29c76"/><rect x="1289.35" y="132.26" width="13.3" height="13.3" fill="#f6b37f"/><rect x="1303.38" y="132.26" width="13.3" height="13.3" fill="#facd89"/><rect x="1317.41" y="132.26" width="13.3" height="13.3" fill="#fff799"/><rect x="1331.44" y="132.26" width="13.3" height="13.3" fill="#cce198"/><rect x="1345.47" y="132.26" width="13.3" height="13.3" fill="#acd598"/><rect x="1359.50" y="132.26" width="13.3" height="13.3" fill="#89c997"/><rect x="1373.53" y="132.26" width="13.3" height="13.3" fill="#84ccc9"/><rect x="1387.56" y="132.26" width="13.3" height="13.3" fill="#7ecef4"/><rect x="1401.59" y="132.26" width="13.3" height="13.3" fill="#88abda"/><rect x="1219.20" y="146.29" width="13.3" height="13.3" fill="#8c97cb"/><rect x="1233.23" y="146.29" width="13.3" height="13.3" fill="#8f82bc"/><rect x="1247.26" y="146.29" width="13.3" height="13.3" fill="#aa89bd"/><rect x="1261.29" y="146.29" width="13.3" height="13.3" fill="#c490bf"/><rect x="1275.32" y="146.29" width="13.3" height="13.3" fill="#f19ec2"/><rect x="1289.35" y="146.29" width="13.3" height="13.3" fill="#f29c9f"/><rect x="1303.38" y="146.29" width="13.3" height="13.3" fill="#ec6941"/><rect x="1317.41" y="146.29" width="13.3" height="13.3" fill="#f19149"/><rect x="1331.44" y="146.29" width="13.3" height="13.3" fill="#f8b551"/><rect x="1345.47" y="146.29" width="13.3" height="13.3" fill="#fff45c"/><rect x="1359.50" y="146.29" width="13.3" height="13.3" fill="#b3d465"/><rect x="1373.53" y="146.29" width="13.3" height="13.3" fill="#80c269"/><rect x="1387.56" y="146.29" width="13.3" height="13.3" fill="#32b16c"/><rect x="1401.59" y="146.29" width="13.3" height="13.3" fill="#13b5b1"/><rect x="1219.20" y="160.32" width="13.3" height="13.3" fill="#00b7ee"/><rect x="1233.23" y="160.32" width="13.3" height="13.3" fill="#448aca"/><rect x="1247.26" y="160.32" width="13.3" height="13.3" fill="#556fb5"/><rect x="1261.29" y="160.32" width="13.3" height="13.3" fill="#5f52a0"/><rect x="1275.32" y="160.32" width="13.3" height="13.3" fill="#8957a1"/><rect x="1289.35" y="160.32" width="13.3" height="13.3" fill="#ae5da1"/><rect x="1303.38" y="160.32" width="13.3" height="13.3" fill="#ea68a2"/><rect x="1317.41" y="160.32" width="13.3" height="13.3" fill="#eb6877"/><rect x="1331.44" y="160.32" width="13.3" height="13.3" fill="#e60012"/><rect x="1345.47" y="160.32" width="13.3" height="13.3" fill="#eb6100"/><rect x="1359.50" y="160.32" width="13.3" height="13.3" fill="#f39800"/><rect x="1373.53" y="160.32" width="13.3" height="13.3" fill="#fff100"/><rect x="1387.56" y="160.32" width="13.3" height="13.3" fill="#8fc31f"/><rect x="1401.59" y="160.32" width="13.3" height="13.3" fill="#22ac38"/><rect x="1219.20" y="174.35" width="13.3" height="13.3" fill="#009944"/><rect x="1233.23" y="174.35" width="13.3" height="13.3" fill="#009e96"/><rect x="1247.26" y="174.35" width="13.3" height="13.3" fill="#00a0e9"/><rect x="1261.29" y="174.35" width="13.3" height="13.3" fill="#0068b7"/><rect x="1275.32" y="174.35" width="13.3" height="13.3" fill="#00479d"/><rect x="1289.35" y="174.35" width="13.3" height="13.3" fill="#1d2088"/><rect x="1303.38" y="174.35" width="13.3" height="13.3" fill="#601986"/><rect x="1317.41" y="174.35" width="13.3" height="13.3" fill="#920783"/><rect x="1331.44" y="174.35" width="13.3" height="13.3" fill="#e4007f"/><rect x="1345.47" y="174.35" width="13.3" height="13.3" fill="#e5004f"/><rect x="1359.50" y="174.35" width="13.3" height="13.3" fill="#a40000"/><rect x="1373.53" y="174.35" width="13.3" height="13.3" fill="#a84200"/><rect x="1387.56" y="174.35" width="13.3" height="13.3" fill="#ac6a00"/><rect x="1401.59" y="174.35" width="13.3" height="13.3" fill="#b7aa00"/><rect x="1219.20" y="188.38" width="13.3" height="13.3" fill="#638c0b"/><rect x="1233.23" y="188.38" width="13.3" height="13.3" fill="#097c25"/><rect x="1247.26" y="188.38" width="13.3" height="13.3" fill="#007130"/><rect x="1261.29" y="188.38" width="13.3" height="13.3" fill="#00736d"/><rect x="1275.32" y="188.38" width="13.3" height="13.3" fill="#0075a9"/><rect x="1289.35" y="188.38" width="13.3" height="13.3" fill="#004986"/><rect x="1303.38" y="188.38" width="13.3" height="13.3" fill="#002e73"/><rect x="1317.41" y="188.38" width="13.3" height="13.3" fill="#100964"/><rect x="1331.44" y="188.38" width="13.3" height="13.3" fill="#440062"/><rect x="1345.47" y="188.38" width="13.3" height="13.3" fill="#6a005f"/><rect x="1359.50" y="188.38" width="13.3" height="13.3" fill="#a4005b"/><rect x="1373.53" y="188.38" width="13.3" height="13.3" fill="#a40035"/><rect x="1387.56" y="188.38" width="13.3" height="13.3" fill="#7d0000"/><rect x="1401.59" y="188.38" width="13.3" height="13.3" fill="#7f2d00"/><rect x="1219.20" y="202.41" width="13.3" height="13.3" fill="#834e00"/><rect x="1233.23" y="202.41" width="13.3" height="13.3" fill="#8a8000"/><rect x="1247.26" y="202.41" width="13.3" height="13.3" fill="#486a00"/><rect x="1261.29" y="202.41" width="13.3" height="13.3" fill="#005e15"/><rect x="1275.32" y="202.41" width="13.3" height="13.3" fill="#005826"/><rect x="1289.35" y="202.41" width="13.3" height="13.3" fill="#005752"/><rect x="1303.38" y="202.41" width="13.3" height="13.3" fill="#005982"/><rect x="1317.41" y="202.41" width="13.3" height="13.3" fill="#003567"/><rect x="1331.44" y="202.41" width="13.3" height="13.3" fill="#001c58"/><rect x="1345.47" y="202.41" width="13.3" height="13.3" fill="#03004c"/><rect x="1359.50" y="202.41" width="13.3" height="13.3" fill="#32004b"/><rect x="1373.53" y="202.41" width="13.3" height="13.3" fill="#500047"/><rect x="1387.56" y="202.41" width="13.3" height="13.3" fill="#7e0043"/><rect x="1401.59" y="202.41" width="13.3" height="13.3" fill="#7d0022"/><rect x="1219.20" y="216.44" width="13.3" height="13.3" fill="#d9c5a8"/><rect x="1233.23" y="216.44" width="13.3" height="13.3" fill="#a8927a"/><rect x="1247.26" y="216.44" width="13.3" height="13.3" fill="#7d6a58"/><rect x="1261.29" y="216.44" width="13.3" height="13.3" fill="#5a4a3e"/><rect x="1275.32" y="216.44" width="13.3" height="13.3" fill="#3a2e2a"/><rect x="1289.35" y="216.44" width="13.3" height="13.3" fill="#d8ae72"/><rect x="1303.38" y="216.44" width="13.3" height="13.3" fill="#b88c54"/><rect x="1317.41" y="216.44" width="13.3" height="13.3" fill="#9c6c30"/><rect x="1331.44" y="216.44" width="13.3" height="13.3" fill="#84541e"/><rect x="1345.47" y="216.44" width="13.3" height="13.3" fill="#6a3906"/></svg>
<div class="abs" style="left:1219px;top:288px;width:221.5px;height:0.9px;background:#3f3f3f;"></div>
<svg class="abs" style="left:1380px;top:290px" width="45" height="16" viewBox="1380 290 45 16">
<path d="M1387.6,294.2 H1394.8 V301.4 H1390.4 L1387.6,298.6 Z" fill="none" stroke="#dedede" stroke-width="1.2"/><path d="M1387.6,298.6 H1390.4 V301.4 Z" fill="#dedede"/>
<g fill="none" stroke="#8a8a8a" stroke-width="1"><path d="M1410,295.6 H1417 M1412,295.4 V294 H1415 V295.4 M1410.8,296 V302 H1416.2 V296 M1412.6,297.4 V300.6 M1414.4,297.4 V300.6"/></g></svg>
<div class="abs" style="left:1219px;top:309.8px;width:221.5px;height:21.4px;background:#424242;"></div>
<div class="abs" style="left:1219px;top:309.8px;width:34.5px;height:21.4px;background:#535353;"></div>
<span class="t" style="left:1226.6px;top:314.9px;font-size:10.00px;color:#f0f0f0;transform:scaleX(0.93);transform-origin:0 50%;">属性</span>
<span class="t" style="left:1261px;top:314.9px;font-size:10.00px;color:#a6a6a6;transform:scaleX(0.93);transform-origin:0 50%;">调整</span>
<div class="abs" style="left:1219px;top:331.2px;width:221.5px;height:227.4px;background:#535353;"></div>
<div class="abs" style="left:1228px;top:336.4px;width:16.6px;height:16.6px;background:#3a3a3a;border-radius:1.5px"></div>
<span class="t" style="left:1250.4px;top:340.5px;font-size:9.78px;color:#dcdcdc;transform:scaleX(0.93);transform-origin:0 50%;">嵌入的智能对象</span>
<div class="abs" style="left:1219px;top:357.6px;width:221.5px;height:0.9px;background:#444444;"></div>
<span class="t" style="left:1226.4px;top:363.7px;font-size:9.25px;color:#c8c8c8;transform:scaleX(0.93);transform-origin:0 50%;">W:</span>
<span class="t" style="left:1244.6px;top:363.7px;font-size:9.35px;color:#d0d0d0;transform:scaleX(0.93);transform-origin:0 50%;word-spacing:1px">9.84 厘米</span>
<span class="t" style="left:1316.6px;top:363.7px;font-size:9.25px;color:#c8c8c8;transform:scaleX(0.93);transform-origin:0 50%;">H:</span>
<span class="t" style="left:1333.4px;top:363.7px;font-size:9.35px;color:#d0d0d0;transform:scaleX(0.93);transform-origin:0 50%;word-spacing:1px">5.26 厘米</span>
<span class="t" style="left:1229px;top:381.9px;font-size:9.25px;color:#c8c8c8;transform:scaleX(0.93);transform-origin:0 50%;">X:</span>
<span class="t" style="left:1319.8px;top:381.9px;font-size:9.25px;color:#c8c8c8;transform:scaleX(0.93);transform-origin:0 50%;">Y:</span>
<div class="abs" style="left:1241.4px;top:381px;width:48px;height:13.4px;background:#434343;border:0.8px solid #6c6c6c"></div>
<div class="abs" style="left:1331.4px;top:381px;width:48px;height:13.4px;background:#434343;border:0.8px solid #6c6c6c"></div>
<span class="t" style="left:1243px;top:381.9px;font-size:9.14px;color:#f2f2f2;transform:scaleX(0.93);transform-origin:0 50%;">126.47 厘米</span>
<span class="t" style="left:1333px;top:381.9px;font-size:9.35px;color:#f2f2f2;transform:scaleX(0.93);transform-origin:0 50%;word-spacing:0.6px">44.9 厘米</span>
<div class="abs" style="left:1222.4px;top:401.6px;width:203.4px;height:0.9px;background:#464646;"></div>
<span class="t" style="left:1226.4px;top:409.3px;font-size:9.57px;color:#d6d6d6;transform:scaleX(0.93);transform-origin:0 50%;">屏幕截图 2026-02-28  103845.png</span>
<div class="abs" style="left:1225.8px;top:426.4px;width:196px;height:14.2px;background:#505050;border:0.8px solid #595959;border-radius:1.5px"></div>
<span class="t" style="left:1233px;top:427.9px;font-size:9.68px;color:#7c7c7c;transform:scaleX(0.93);transform-origin:0 50%;">不应用图层复合</span>
<div class="abs" style="left:1222.4px;top:448px;width:203.4px;height:0.9px;background:#464646;"></div>
<div class="abs" style="left:1277px;top:456.2px;width:95.8px;height:15.2px;background:#3f3f3f;border:0.8px solid #5c5c5c;border-radius:2px"></div>
<div class="abs" style="left:1277px;top:475.4px;width:95.8px;height:15px;background:#3f3f3f;border:0.8px solid #5c5c5c;border-radius:2px"></div>
<span class="t" style="left:1306.8px;top:458.3px;font-size:9.73px;color:#e8e8e8;transform:scaleX(0.93);transform-origin:0 50%;">编辑内容</span>
<span class="t" style="left:1287.8px;top:477.3px;font-size:9.57px;color:#e8e8e8;transform:scaleX(0.93);transform-origin:0 50%;">转换为链接对象...</span>
<div class="abs" style="left:1428.4px;top:358.5px;width:12.1px;height:180.5px;background:#4d4d4d;"></div>
<div class="abs" style="left:1430px;top:372px;width:9.2px;height:144px;background:#6b6b6b;"></div>
<svg class="abs" style="left:1219px;top:309px" width="222" height="235" viewBox="1219 309 222 235">
<g fill="#d4d4d4"><rect x="1427.8" y="318" width="8.2" height="1.2"/><rect x="1427.8" y="320.2" width="8.2" height="1.2"/><rect x="1427.8" y="322.4" width="8.2" height="1.2"/></g>
<path d="M1233,340 H1237.6 L1240,342.4 V349.6 H1233 Z" fill="#e4e4e4"/><path d="M1237,344.6 h2.4 v2.4 h-2.4z M1234,346.6 h2.4 v2.4 h-2.4z" fill="#3a3a3a"/><path d="M1237.4,340 V342.6 H1240" fill="none" stroke="#3a3a3a" stroke-width="0.6"/>
<path d="M1431.6,368.4 L1434.4,365.8 L1437.2,368.4 M1431.6,530.4 L1434.4,533 L1437.2,530.4" fill="none" stroke="#9a9a9a" stroke-width="1"/>
<path d="M1413.4,432.4 L1416,435 L1418.6,432.4" fill="none" stroke="#6c6c6c" stroke-width="1"/>
</svg>
<div class="abs" style="left:1219px;top:560.8px;width:221.5px;height:21px;background:#424242;"></div>
<div class="abs" style="left:1219px;top:560.8px;width:34.5px;height:21px;background:#535353;"></div>
<span class="t" style="left:1226.6px;top:565.9px;font-size:10.00px;color:#f0f0f0;transform:scaleX(0.93);transform-origin:0 50%;">图层</span>
<span class="t" style="left:1261px;top:565.9px;font-size:10.00px;color:#a6a6a6;transform:scaleX(0.93);transform-origin:0 50%;">通道</span>
<span class="t" style="left:1296px;top:565.9px;font-size:10.00px;color:#a6a6a6;transform:scaleX(0.93);transform-origin:0 50%;">路径</span>
<div class="abs" style="left:1253.5px;top:560.8px;width:0.8px;height:21px;background:#3a3a3a;"></div>
<div class="abs" style="left:1287.6px;top:560.8px;width:0.8px;height:21px;background:#3a3a3a;"></div>
<div class="abs" style="left:1323px;top:560.8px;width:0.8px;height:21px;background:#3a3a3a;"></div>
<div class="abs" style="left:1253px;top:58.6px;width:0.8px;height:21px;background:#3a3a3a;"></div>
<div class="abs" style="left:1287px;top:58.6px;width:0.8px;height:21px;background:#3a3a3a;"></div>
<div class="abs" style="left:1253.5px;top:309.8px;width:0.8px;height:21.4px;background:#3a3a3a;"></div>
<div class="abs" style="left:1287.6px;top:309.8px;width:0.8px;height:21.4px;background:#3a3a3a;"></div>
<div class="abs" style="left:1219px;top:581.8px;width:221.5px;height:227.2px;background:#535353;"></div>
<div class="abs" style="left:1222.4px;top:590px;width:67px;height:14.4px;background:#454545;border:0.8px solid #666;border-radius:2px"></div>
<span class="t" style="left:1239.8px;top:591.7px;font-size:9.78px;color:#e6e6e6;transform:scaleX(0.93);transform-origin:0 50%;">类型</span>
<div class="abs" style="left:1219px;top:608px;width:221.5px;height:0.9px;background:#444;"></div>
<div class="abs" style="left:1222.4px;top:611.2px;width:90.6px;height:13.8px;background:#454545;border:0.8px solid #666;border-radius:2px"></div>
<span class="t" style="left:1229px;top:612.5px;font-size:9.78px;color:#e6e6e6;transform:scaleX(0.93);transform-origin:0 50%;">正常</span>
<span class="t" style="left:1319.8px;top:612.5px;font-size:9.73px;color:#d8d8d8;transform:scaleX(0.93);transform-origin:0 50%;">不透明度:</span>
<div class="abs" style="left:1363.8px;top:611.2px;width:43px;height:13.8px;background:#454545;border:0.8px solid #666;border-radius:2px"></div>
<span class="t" style="left:1366px;top:612.5px;font-size:9.25px;color:#f2f2f2;transform:scaleX(0.93);transform-origin:0 50%;">100%</span>
<div class="abs" style="left:1219px;top:628.4px;width:221.5px;height:0.9px;background:#464646;"></div>
<span class="t" style="left:1224px;top:634.1px;font-size:9.68px;color:#d8d8d8;transform:scaleX(0.93);transform-origin:0 50%;">锁定:</span>
<span class="t" style="left:1339.2px;top:634.1px;font-size:9.68px;color:#d8d8d8;transform:scaleX(0.93);transform-origin:0 50%;">填充:</span>
<div class="abs" style="left:1363.8px;top:632.8px;width:43px;height:13.6px;background:#454545;border:0.8px solid #666;border-radius:2px"></div>
<span class="t" style="left:1366px;top:634.1px;font-size:9.25px;color:#f2f2f2;transform:scaleX(0.93);transform-origin:0 50%;">100%</span>
<div class="abs" style="left:1219px;top:651px;width:209.4px;height:30.2px;background:#696969;"></div>
<div class="abs" style="left:1219px;top:681.2px;width:209.4px;height:0.9px;background:#454545;"></div>
<div class="abs" style="left:1219px;top:711.6px;width:209.4px;height:0.9px;background:#454545;"></div>
<div class="abs" style="left:1219px;top:741.6px;width:209.4px;height:0.9px;background:#454545;"></div>
<div class="abs" style="left:1219px;top:771.8px;width:209.4px;height:0.9px;background:#454545;"></div>
<div class="abs" style="left:1219px;top:789.4px;width:209.4px;height:0.9px;background:#454545;"></div>
<div class="abs" style="left:1219px;top:650.4px;width:221.5px;height:0.9px;background:#454545;"></div>
<div class="abs" style="left:1243px;top:651px;width:0.8px;height:138.4px;background:#474747;"></div>
<div class="abs" style="left:1428.4px;top:651px;width:12.1px;height:138.4px;background:#4d4d4d;"></div>
<div class="abs" style="left:1430px;top:664px;width:9.2px;height:103px;background:#6b6b6b;"></div>
<div class="abs" style="left:1219px;top:789.4px;width:221.5px;height:19.6px;background:#535353;"></div>
<span class="t" style="left:1278.4px;top:660.7px;font-size:9.52px;color:#f0f0f0;transform:scaleX(0.93);transform-origin:0 50%;">屏幕截图 2026-02-28 103845</span>
<span class="t" style="left:1278.4px;top:691.1px;font-size:9.52px;color:#e0e0e0;transform:scaleX(0.93);transform-origin:0 50%;">屏幕截图 2026-02-28 103845</span>
<span class="t" style="left:1278.4px;top:721.3px;font-size:9.03px;color:#e0e0e0;transform:scaleX(0.93);transform-origin:0 50%;">UVW</span>
<span class="t" style="left:1312.6px;top:751.3px;font-size:9.78px;color:#e0e0e0;transform:scaleX(0.93);transform-origin:0 50%;">涂装组</span>
<span class="t" style="left:1278.4px;top:781.9px;font-size:9.68px;color:#e0e0e0;transform:scaleX(0.93);transform-origin:0 50%;clip-path:inset(0 0 4.2px 0)">图层 25</span>
<svg class="abs" style="left:1219px;top:58px" width="222" height="751" viewBox="1219 58 222 751"><defs><pattern id="chk" width="7.6" height="7.6" patternUnits="userSpaceOnUse" x="1246" y="654"><rect width="7.6" height="7.6" fill="#fff"/><rect width="3.8" height="3.8" fill="#cdcdcd"/><rect x="3.8" y="3.8" width="3.8" height="3.8" fill="#cdcdcd"/></pattern><pattern id="chkg" width="7.6" height="7.6" patternUnits="userSpaceOnUse" x="1246" y="714.6"><rect width="7.6" height="7.6" fill="#ffffff"/><rect width="3.8" height="3.8" fill="#d6e8d6"/><rect x="3.8" y="3.8" width="3.8" height="3.8" fill="#d6e8d6"/></pattern></defs>
<g fill="#d4d4d4"><rect x="1427.8" y="569" width="8.2" height="1.2"/><rect x="1427.8" y="571.2" width="8.2" height="1.2"/><rect x="1427.8" y="573.4" width="8.2" height="1.2"/><rect x="1427.8" y="65.8" width="8.2" height="1.2"/><rect x="1427.8" y="68" width="8.2" height="1.2"/><rect x="1427.8" y="70.2" width="8.2" height="1.2"/></g>
<circle cx="1231.4" cy="596.4" r="2.4" fill="none" stroke="#dedede" stroke-width="1.1"/><path d="M1229.6,598.4 L1227.6,600.8" stroke="#dedede" stroke-width="1.3"/>
<path d="M1281.2,596.4 L1283.6,598.8 L1286,596.4 M1304.6,617.2 L1307,619.6 L1309.4,617.2 M1398.6,617.2 L1401,619.6 L1403.4,617.2 M1398.6,638.6 L1401,641 L1403.4,638.6" fill="none" stroke="#c4c4c4" stroke-width="1"/>
<path d="M1394.6,611.2 V625 M1394.6,632.8 V646.4" stroke="#666" stroke-width="0.8"/>
<rect x="1301.6" y="593.6" width="8.6" height="7" fill="none" stroke="#dedede" stroke-width="1.1"/><path d="M1302.6,599.6 L1305,596.6 L1306.8,598.4 L1308,597.4 L1309.4,599.6 Z" fill="#dedede"/>
<circle cx="1325" cy="597.2" r="3.7" fill="none" stroke="#dedede" stroke-width="1.1"/><path d="M1325,593.5 a3.7,3.7 0 0 1 0,7.4 Z" fill="#dedede"/>
<path d="M1340.2,593.4 H1348 V595.8 H1347 Q1346.8,594.6 1345.8,594.6 H1345 V599.8 Q1345,600.4 1346,600.4 V601.2 H1342.2 V600.4 Q1343.2,600.4 1343.2,599.8 V594.6 H1342.4 Q1341.4,594.6 1341.2,595.8 H1340.2 Z" fill="#dedede"/>
<rect x="1359.8" y="594.2" width="6.4" height="6" fill="none" stroke="#dedede" stroke-width="1"/><g fill="#dedede"><rect x="1358.4" y="592.8" width="2.4" height="2.4"/><rect x="1365" y="592.8" width="2.4" height="2.4"/><rect x="1358.4" y="599.2" width="2.4" height="2.4"/><rect x="1365" y="599.2" width="2.4" height="2.4"/></g>
<path d="M1378.6,593 H1383 L1385.4,595.4 V601.4 H1378.6 Z" fill="#dedede"/><path d="M1382,597 h2 v2 h-2z M1379.6,598.8 h2 v2 h-2z" fill="#535353"/>
<rect x="1400" y="590.6" width="5.6" height="11.6" rx="2.8" fill="#3c3c3c"/><circle cx="1402.8" cy="593.2" r="2.7" fill="#e8e8e8"/>
<g><rect x="1253.2" y="635.2" width="8.8" height="8.8" fill="#9c9c9c"/><g fill="#5c5c5c"><rect x="1253.2" y="635.2" width="2.93" height="2.93"/><rect x="1259.07" y="635.2" width="2.93" height="2.93"/><rect x="1256.13" y="638.13" width="2.93" height="2.93"/><rect x="1253.2" y="641.07" width="2.93" height="2.93"/><rect x="1259.07" y="641.07" width="2.93" height="2.93"/></g></g>
<path d="M1274.4,639.6 L1278.6,635" stroke="#9a9a9a" stroke-width="1.8" stroke-linecap="round"/><path d="M1273.8,639.6 q-2,0.2 -2,2.2 q0,1 -1.2,1.6 q3,0.8 4.4,-1.4 q0.4,-1.4 -1.2,-2.4z" fill="#9a9a9a"/>
<g stroke="#dedede" stroke-width="1" fill="#dedede"><path d="M1291.6,635.8 V643.8 M1287.6,639.8 H1295.6" fill="none"/><path d="M1291.6,634.6 l1.6,1.9 h-3.2z M1291.6,645 l1.6,-1.9 h-3.2z M1286.4,639.8 l1.9,-1.6 v3.2z M1296.8,639.8 l-1.9,-1.6 v3.2z" stroke="none"/></g>
<g fill="none" stroke="#dedede" stroke-width="1.1"><path d="M1306.4,634.8 V643 H1314.4 M1304.4,636.8 H1312.4 V645"/></g>
<rect x="1323.2" y="639" width="6.6" height="5.4" rx="0.6" fill="#dedede"/><path d="M1324.6,639 V637.4 a1.9,1.9 0 0 1 3.8,0 V639" fill="none" stroke="#dedede" stroke-width="1.1"/>
<path d="M1225.8,666.4 q5.2,-7 10.4,0 q-5.2,7 -10.4,0z" fill="#e6e6e6"/><circle cx="1231" cy="666.4" r="2.3" fill="#696969"/><circle cx="1231" cy="666.4" r="1.1" fill="#e6e6e6"/>
<path d="M1225.8,696.6 q5.2,-7 10.4,0 q-5.2,7 -10.4,0z" fill="#e6e6e6"/><circle cx="1231" cy="696.6" r="2.3" fill="#535353"/><circle cx="1231" cy="696.6" r="1.1" fill="#e6e6e6"/>
<path d="M1225.8,787.4 q5.2,-7 10.4,0 q-5.2,7 -10.4,0z" fill="#e6e6e6"/><circle cx="1231" cy="787.4" r="2.3" fill="#535353"/><circle cx="1231" cy="787.4" r="1.1" fill="#e6e6e6"/>
<rect x="1226" y="722.2" width="8.8" height="8.8" fill="none" stroke="#474747" stroke-width="0.9"/><rect x="1226" y="752.4" width="8.8" height="8.8" fill="none" stroke="#474747" stroke-width="0.9"/>
<rect x="1246" y="654" width="24.6" height="24.4" fill="url(#chk)"/><rect x="1259.6" y="667.6" width="11" height="10.8" fill="#535353"/><path d="M1264.4,669 H1268 L1270,671 V677.4 H1264.4 Z" fill="#e8e8e8"/><rect x="1261" y="673.4" width="4.6" height="4.4" fill="#e8e8e8" stroke="#535353" stroke-width="0.8"/><path d="M1267.6,669 V671.4 H1270" fill="none" stroke="#535353" stroke-width="0.7"/><path d="M1244.6,657.6 V652.6 H1249.6 M1267,652.6 H1272 V657.6 M1272,674.8 V679.8 H1267 M1249.6,679.8 H1244.6 V674.8" fill="none" stroke="#fff" stroke-width="1.1"/>
<rect x="1246" y="684.4" width="24.6" height="24.4" fill="url(#chk)"/><rect x="1259.6" y="698.0" width="11" height="10.8" fill="#535353"/><path d="M1264.4,699.4 H1268 L1270,701.4 V707.8 H1264.4 Z" fill="#e8e8e8"/><rect x="1261" y="703.8" width="4.6" height="4.4" fill="#e8e8e8" stroke="#535353" stroke-width="0.8"/><path d="M1267.6,699.4 V701.8 H1270" fill="none" stroke="#535353" stroke-width="0.7"/>
<rect x="1246" y="714.6" width="24.6" height="24.4" fill="url(#chkg)"/><rect x="1259.6" y="728.2" width="11" height="10.8" fill="#535353"/><path d="M1264.4,729.6 H1268 L1270,731.6 V738.0 H1264.4 Z" fill="#e8e8e8"/><rect x="1261" y="734.0" width="4.6" height="4.4" fill="#e8e8e8" stroke="#535353" stroke-width="0.8"/><path d="M1267.6,729.6 V732.0 H1270" fill="none" stroke="#535353" stroke-width="0.7"/>
<path d="M1246.2,755.4 L1248.6,757.8 L1251,755.4" fill="none" stroke="#c4c4c4" stroke-width="1"/>
<path d="M1255.6,753.4 H1259 L1260,754.6 H1265.2 V761 H1255.6 Z" fill="#d8d8d8"/>
<g fill="none" stroke="#d8d8d8" stroke-width="1"><rect x="1272" y="752" width="3.2" height="5" rx="1.6"/><rect x="1272" y="757" width="3.2" height="5" rx="1.6"/></g><path d="M1273.6,755 V759" stroke="#d8d8d8" stroke-width="1"/>
<rect x="1280.4" y="744.8" width="24.4" height="23.8" fill="#000"/><g fill="#fff"><rect x="1280.4" y="746.4" width="20" height="3.4"/><rect x="1302" y="745" width="2.8" height="4"/><rect x="1281" y="752.6" width="23.8" height="2.6"/><rect x="1280.4" y="756.4" width="7" height="4"/><rect x="1292" y="757.6" width="12.8" height="3.4"/><rect x="1286" y="759" width="8" height="2"/></g>
<g><rect x="1246" y="775" width="24.6" height="15.4" fill="#000"/><g fill="#fff"><rect x="1246" y="776.6" width="19.6" height="3.2"/><rect x="1246" y="782" width="20.4" height="2.6"/><rect x="1246" y="786.6" width="10" height="3.8"/><rect x="1259" y="786.6" width="11.6" height="2.6"/><rect x="1266.4" y="778" width="4.2" height="6" fill="#ddd"/></g><rect x="1267.6" y="775.6" width="2" height="2" fill="#b02020"/></g>
<rect x="1407.8" y="725.6" width="7" height="5.8" rx="0.6" fill="#dedede"/><path d="M1409.4,725.6 V724 a1.9,1.9 0 0 1 3.8,0 V725.6" fill="none" stroke="#dedede" stroke-width="1.1"/><rect x="1410.8" y="727.6" width="1" height="2" fill="#535353"/>
<path d="M1431.6,660.4 L1434.4,657.8 L1437.2,660.4 M1431.6,780.6 L1434.4,783.2 L1437.2,780.6" fill="none" stroke="#9a9a9a" stroke-width="1"/>
<rect x="1219" y="789.4" width="221.5" height="19.6" fill="#535353"/><rect x="1219" y="789.4" width="221.5" height="0.9" fill="#454545"/>
<g fill="none" stroke="#8a8a8a" stroke-width="1"><rect x="1283.6" y="798" width="5" height="4" rx="2"/><rect x="1287.6" y="798" width="5" height="4" rx="2"/></g>
<rect x="1325" y="796" width="9" height="7.6" fill="#dedede"/><circle cx="1329.5" cy="799.8" r="2.2" fill="#535353"/>
<circle cx="1350.6" cy="799.8" r="3.8" fill="none" stroke="#dedede" stroke-width="1.1"/><path d="M1347.9,802.5 a3.8,3.8 0 0 1 5.4,-5.4 Z" fill="#dedede"/>
<path d="M1367,796 H1370.4 L1371.4,797.2 H1376.4 V803.6 H1367 Z" fill="#dedede"/>
<path d="M1389,796.4 H1396 V803.4 H1391.8 L1389,800.6 Z" fill="none" stroke="#dedede" stroke-width="1.1"/><path d="M1389,800.6 H1391.8 V803.4 Z" fill="#dedede"/>
<rect x="1316.2" y="805.4" width="1.4" height="1.2" fill="#dedede"/><rect x="1358" y="805.4" width="1.4" height="1.2" fill="#dedede"/></svg>
<span class="t" style="left:1305px;top:793.6px;font-size:10.40px;color:#dedede;font-style:italic;font-family:'Liberation Serif',serif;font-weight:bold">fx</span>
<span class="t" style="left:1411.6px;top:785px;height:20px;line-height:20px;font-family:'DejaVu Sans Mono','Liberation Mono',monospace;font-size:18.2px;letter-spacing:0.05px;color:#fff;-webkit-text-stroke:0.5px #fff;text-shadow:-1.6px 0 #000,1.6px 0 #000,0 -1.6px #000,0 1.6px #000,-1.4px -1.4px #000,1.4px 1.4px #000,-1.4px 1.4px #000,1.4px -1.4px #000,-2.4px 0 #000,2.4px 0 #000,0 2.4px #000,0 -2.4px #000">@Vefans</span>
<div class="abs" style="left:1490.4px;top:810px;width:0.8px;height:6px;background:#7c8ca4;"></div>
<span class="t" style="left:1412.5px;top:812px;font-size:9.4px;color:#e8e8e8;height:4px;overflow:hidden;line-height:10px">22:12</span>
<div class="abs" style="left:8px;top:4px;width:12px;height:12px;background:#001d34;border:1px solid #2aa7e0;border-radius:1px"></div>
<span class="t" style="left:9.9px;top:4.3px;font-size:8.00px;color:#31c5f4;letter-spacing:-0.2px">Ps</span>
<span class="t" style="left:35.7px;top:4.1px;font-size:10.38px;color:#e6e6e6;transform:scaleX(0.92);transform-origin:0 50%;">文件(F)</span>
<span class="t" style="left:77.7px;top:4.1px;font-size:10.38px;color:#e6e6e6;transform:scaleX(0.92);transform-origin:0 50%;">编辑(E)</span>
<span class="t" style="left:119.7px;top:4.1px;font-size:10.38px;color:#e6e6e6;transform:scaleX(0.92);transform-origin:0 50%;">图像(I)</span>
<span class="t" style="left:159.7px;top:4.1px;font-size:10.38px;color:#e6e6e6;transform:scaleX(0.92);transform-origin:0 50%;">图层(L)</span>
<span class="t" style="left:201.3px;top:4.1px;font-size:10.38px;color:#e6e6e6;transform:scaleX(0.92);transform-origin:0 50%;">文字(Y)</span>
<span class="t" style="left:244.3px;top:4.1px;font-size:10.38px;color:#e6e6e6;transform:scaleX(0.92);transform-origin:0 50%;">选择(S)</span>
<span class="t" style="left:286px;top:4.1px;font-size:10.38px;color:#e6e6e6;transform:scaleX(0.92);transform-origin:0 50%;">滤镜(T)</span>
<span class="t" style="left:328.3px;top:4.1px;font-size:10.38px;color:#e6e6e6;transform:scaleX(0.92);transform-origin:0 50%;">3D(D)</span>
<span class="t" style="left:363.3px;top:4.1px;font-size:10.38px;color:#e6e6e6;transform:scaleX(0.92);transform-origin:0 50%;">视图(V)</span>
<span class="t" style="left:406px;top:4.1px;font-size:10.38px;color:#e6e6e6;transform:scaleX(0.92);transform-origin:0 50%;">窗口(W)</span>
<span class="t" style="left:451.7px;top:4.1px;font-size:10.38px;color:#e6e6e6;transform:scaleX(0.92);transform-origin:0 50%;">帮助(H)</span>
<svg class="abs" style="left:1405px;top:0" width="90" height="18" viewBox="1405 0 90 18">
<path d="M1411.5,0 V11 Q1411.5,14.2 1414.7,14.2 H1487.5 Q1490.7,14.2 1490.7,11 V0 M1433.3,0 V14 M1455,0 V14" fill="none" stroke="#626262" stroke-width="0.8"/>
<rect x="1418.3" y="8.6" width="7.8" height="2" fill="#dcdcdc"/>
<rect x="1442.2" y="3.8" width="6.6" height="5" fill="none" stroke="#dcdcdc" stroke-width="1.3"/><rect x="1439.6" y="6" width="6.2" height="4.8" fill="#535353" stroke="#dcdcdc" stroke-width="1.3"/>
<path d="M1469.4,4.4 L1476.4,10 M1476.4,4.4 L1469.4,10" stroke="#dcdcdc" stroke-width="1.7"/>
</svg>
<svg class="abs" style="left:0;top:22px" width="440" height="27" viewBox="0 22 440 27">
<g fill="#3b3b3b"><rect x="4.2" y="28" width="2" height="1.4"/><rect x="4.2" y="30.6" width="2" height="1.4"/><rect x="4.2" y="33.2" width="2" height="1.4"/><rect x="4.2" y="35.8" width="2" height="1.4"/><rect x="4.2" y="38.4" width="2" height="1.4"/><rect x="4.2" y="41" width="2" height="1.4"/></g>
<!-- magic eraser icon -->
<g transform="rotate(-38 24 36)"><rect x="18.4" y="32.6" width="11.6" height="6.2" rx="1.2" fill="#e4e4e4"/><rect x="18.4" y="32.6" width="4" height="6.2" rx="1.2" fill="#535353" stroke="#e4e4e4" stroke-width="1.1"/></g>
<g fill="#e4e4e4"><path d="M21.6,29.2 l0.7,1.5 1.5,0.7 -1.5,0.7 -0.7,1.5 -0.7,-1.5 -1.5,-0.7 1.5,-0.7z"/><circle cx="17" cy="32" r="0.9"/><circle cx="16.6" cy="36.6" r="1"/><circle cx="19.2" cy="34.4" r="0.6"/></g>
<path d="M36,35.2 L38.5,37.8 L41,35.2" fill="none" stroke="#c8c8c8" stroke-width="1"/>
<path d="M48.4,26.6 V44.2 M176.8,26.6 V44.2 M317.3,26.6 V44.2 M423.2,26.6 V44.2" stroke="#3f3f3f" stroke-width="1"/>
<rect x="83.4" y="28.5" width="24.4" height="13.8" fill="#434343" stroke="#6a6a6a" stroke-width="0.8"/>
<rect x="374.2" y="28.2" width="41.6" height="14.4" rx="1.5" fill="#434343" stroke="#6a6a6a" stroke-width="0.8"/><path d="M404.2,28.2 V42.6" stroke="#6a6a6a" stroke-width="0.8"/>
<path d="M407.6,34.6 L410.3,37.3 L413,34.6" fill="none" stroke="#c8c8c8" stroke-width="1"/>
<g><rect x="114.4" y="29.6" width="10.2" height="10.2" rx="2" fill="#dadada"/><rect x="183.4" y="29.6" width="10.2" height="10.2" rx="2" fill="#dadada"/><rect x="226.4" y="29.6" width="10.2" height="10.2" rx="2" fill="#dadada"/></g>
<g fill="none" stroke="#1e1e1e" stroke-width="1.5"><path d="M116.6,34.6 L118.8,37 L122.6,32.2"/><path d="M185.6,34.6 L187.8,37 L191.6,32.2"/><path d="M228.6,34.6 L230.8,37 L234.6,32.2"/></g>
</svg>
<span class="t" style="left:57.2px;top:30.6px;font-size:10.33px;color:#dedede;transform:scaleX(0.9);transform-origin:0 50%;">容差<span style="margin-left:1.6px">:</span></span>
<span class="t" style="left:85.8px;top:30.5px;font-size:9.77px;color:#f4f4f4;transform:scaleX(0.88);transform-origin:0 50%;">20</span>
<span class="t" style="left:129.8px;top:30.6px;font-size:10.11px;color:#dedede;transform:scaleX(0.9);transform-origin:0 50%;">消除锯齿</span>
<span class="t" style="left:198.7px;top:30.6px;font-size:10.11px;color:#dedede;transform:scaleX(0.9);transform-origin:0 50%;">连续</span>
<span class="t" style="left:241.7px;top:30.6px;font-size:10.22px;color:#dedede;transform:scaleX(0.9);transform-origin:0 50%;">对所有图层取样</span>
<span class="t" style="left:329.4px;top:30.6px;font-size:10.11px;color:#dedede;transform:scaleX(0.9);transform-origin:0 50%;">不透明度<span style="margin-left:1.2px">:</span></span>
<span class="t" style="left:376.4px;top:30.5px;font-size:9.77px;color:#f4f4f4;transform:scaleX(0.88);transform-origin:0 50%;">100%</span>
<svg class="abs" style="left:1410px;top:24px" width="82" height="22" viewBox="1410 24 82 22">
<circle cx="1421" cy="33.6" r="4" fill="none" stroke="#dcdcdc" stroke-width="1.5"/><path d="M1418,37 L1414.8,40.4" stroke="#dcdcdc" stroke-width="1.8"/>
<rect x="1437.2" y="30.2" width="12.4" height="10.2" fill="none" stroke="#dcdcdc" stroke-width="1.3"/><rect x="1437.2" y="30.2" width="12.4" height="1.8" fill="#dcdcdc"/><rect x="1439" y="33.6" width="2" height="4.6" fill="#dcdcdc"/>
<path d="M1457.2,34.4 L1459.6,36.8 L1462,34.4" fill="none" stroke="#c8c8c8" stroke-width="1"/>
<path d="M1477,32.6 H1474 V40.6 H1485.2 V32.6 H1482.2" fill="none" stroke="#dcdcdc" stroke-width="1.3"/><path d="M1479.6,37 V27.6 M1476.8,30.4 L1479.6,27.4 L1482.4,30.4" fill="none" stroke="#dcdcdc" stroke-width="1.3"/>
</svg>
<div class="abs" style="left:32px;top:48.6px;width:1154px;height:22.6px;background:#424242"></div>
<div class="abs" style="left:302.6px;top:48.6px;width:1px;height:22.6px;background:#383838"></div>
<div class="abs" style="left:581px;top:48.6px;width:1px;height:22.6px;background:#383838"></div>
<div class="abs" style="left:582px;top:48.6px;width:324px;height:22.6px;background:#535353"></div>
<div class="abs" style="left:906px;top:48.6px;width:1px;height:22.6px;background:#383838"></div>
<span class="t" style="left:40px;top:55.0px;font-size:10.22px;color:#a4a4a4;transform:scaleX(0.93);transform-origin:0 50%;">06款GK50 for 知更鸟模板.psd @ 20.1% (图层 25, RGB/8)</span>
<span class="t" style="left:310.8px;top:55.0px;font-size:10.27px;color:#a4a4a4;transform:scaleX(0.93);transform-origin:0 50%;">屏幕截图 2026-02-28 103845.png @ 192% (图层 0, RGB/8)</span>
<span class="t" style="left:590.8px;top:55.0px;font-size:9.97px;color:#ececec;transform:scaleX(0.93);transform-origin:0 50%;">06_GK50 GPT 1st.psd @ 22.2% (屏幕截图 2026-02-28 103845, RGB/8)</span>
<svg class="abs" style="left:280px;top:52px" width="630" height="16" viewBox="280 52 630 16">
<g stroke="#b8b8b8" stroke-width="1.3"><path d="M288.6,58 L293,62.4 M293,58 L288.6,62.4"/><path d="M568.6,58 L573,62.4 M573,58 L568.6,62.4"/></g>
<path d="M893.6,58 L898,62.4 M898,58 L893.6,62.4" stroke="#e0e0e0" stroke-width="1.3"/>
</svg>
<svg class="abs" style="left:0;top:49px" width="30" height="760" viewBox="0 49 30 760"><rect x="0" y="48.6" width="30" height="9" fill="#424242"/>
<path d="M4.4,52.2 L7,53.8 L4.4,55.4 Z M7.6,52.2 L10.2,53.8 L7.6,55.4 Z" fill="#e6e6e6"/>
<g fill="#444"><rect x="7.4" y="61.3" width="1.2" height="2.2"/><rect x="9.6" y="61.3" width="1.2" height="2.2"/><rect x="11.8" y="61.3" width="1.2" height="2.2"/><rect x="14.0" y="61.3" width="1.2" height="2.2"/><rect x="16.2" y="61.3" width="1.2" height="2.2"/><rect x="18.4" y="61.3" width="1.2" height="2.2"/><rect x="20.6" y="61.3" width="1.2" height="2.2"/></g>
<rect x="3" y="274" width="24.4" height="19.4" rx="1.5" fill="#363636"/>
<path d="M25.6,88.9 L25.6,86.3 L23,88.9 Z" fill="#c8c8c8"/>
<path d="M25.6,107.8 L25.6,105.2 L23,107.8 Z" fill="#c8c8c8"/>
<path d="M25.6,128.2 L25.6,125.6 L23,128.2 Z" fill="#c8c8c8"/>
<path d="M25.6,148.2 L25.6,145.6 L23,148.2 Z" fill="#c8c8c8"/>
<path d="M25.6,168.2 L25.6,165.6 L23,168.2 Z" fill="#c8c8c8"/>
<path d="M25.6,188.4 L25.6,185.8 L23,188.4 Z" fill="#c8c8c8"/>
<path d="M25.6,208.9 L25.6,206.3 L23,208.9 Z" fill="#c8c8c8"/>
<path d="M25.6,229.4 L25.6,226.8 L23,229.4 Z" fill="#c8c8c8"/>
<path d="M25.6,249.8 L25.6,247.2 L23,249.8 Z" fill="#c8c8c8"/>
<path d="M25.6,269.9 L25.6,267.3 L23,269.9 Z" fill="#c8c8c8"/>
<path d="M25.6,290.2 L25.6,287.6 L23,290.2 Z" fill="#c8c8c8"/>
<path d="M25.6,310.2 L25.6,307.6 L23,310.2 Z" fill="#c8c8c8"/>
<path d="M25.6,330.6 L25.6,328.0 L23,330.6 Z" fill="#c8c8c8"/>
<path d="M25.6,351.0 L25.6,348.4 L23,351.0 Z" fill="#c8c8c8"/>
<path d="M25.6,371.0 L25.6,368.4 L23,371.0 Z" fill="#c8c8c8"/>
<path d="M25.6,391.5 L25.6,388.9 L23,391.5 Z" fill="#c8c8c8"/>
<path d="M25.6,411.4 L25.6,408.8 L23,411.4 Z" fill="#c8c8c8"/>
<path d="M25.6,431.2 L25.6,428.6 L23,431.2 Z" fill="#c8c8c8"/>
<path d="M25.6,452.0 L25.6,449.4 L23,452.0 Z" fill="#c8c8c8"/>
<path d="M25.6,492.6 L25.6,490.0 L23,492.6 Z" fill="#c8c8c8"/>
<g stroke="#dedede" stroke-width="1.3" fill="#dedede"><path d="M14,76.7 V87.89999999999999 M8.4,82.3 H19.6" fill="none"/><path d="M14,75.5 l2.2,2.6 h-4.4z M14,89.1 l2.2,-2.6 h-4.4z M7.2,82.3 l2.6,-2.2 v4.4z M20.8,82.3 l-2.6,-2.2 v4.4z" stroke="none"/></g>
<rect x="8.6" y="96.2" width="11.6" height="10" fill="none" stroke="#dedede" stroke-width="1.2" stroke-dasharray="2.4 1.4"/>
<g fill="none" stroke="#dedede" stroke-width="1.3"><ellipse cx="15.4" cy="120.39999999999999" rx="5.8" ry="3.8" transform="rotate(-14 15.4 120.39999999999999)"/><path d="M10.6,122.8 q-1.6,1.2 -0.4,2.6 q1.2,1.2 -0.6,2.8"/></g>
<g fill="none" stroke="#dedede"><ellipse cx="12" cy="143.2" rx="3.8" ry="4.4" stroke-width="1" stroke-dasharray="1.6 1.2"/><path d="M14.6,142.2 L20.6,136.2" stroke-width="2.2"/><path d="M12.6,145.0 q0.4,-2.6 2.6,-2.6" stroke-width="1.6"/></g>
<g fill="none" stroke="#dedede" stroke-width="1.6"><path d="M10.6,155.2 V164.6 H20"/><path d="M7.6,158.2 H17 V167.6"/></g>
<g stroke="#dedede" fill="#dedede"><path d="M9,187.4 L9.6,184.60000000000002 L15.4,178.8 L17.6,181.0 L11.8,186.8 Z" fill="none" stroke-width="1.1"/><path d="M14.4,177.8 L18.6,182.0" stroke-width="1.8"/><path d="M16,179.4 L19,176.4" stroke-width="3" stroke-linecap="round"/></g>
<circle cx="10.6" cy="198.9" r="3.2" fill="none" stroke="#dedede" stroke-width="0.9" stroke-dasharray="1.3 1"/>
<g transform="rotate(-45 15 203.3)"><rect x="7.6" y="199.9" width="14.8" height="6.8" rx="2.6" fill="#dedede"/><rect x="12.4" y="199.9" width="5.2" height="6.8" fill="#535353" opacity="0.55"/><circle cx="13.8" cy="202.10000000000002" r="0.6" fill="#dedede"/><circle cx="16.2" cy="202.10000000000002" r="0.6" fill="#dedede"/><circle cx="13.8" cy="204.5" r="0.6" fill="#dedede"/><circle cx="16.2" cy="204.5" r="0.6" fill="#dedede"/></g>
<g fill="#dedede" stroke="#dedede"><path d="M15.4,223.20000000000002 L20.6,217.20000000000002" stroke-width="2.2" stroke-linecap="round"/><path d="M14.6,223.0 q-2.6,0.4 -2.6,2.8 q0,1.4 -1.6,2.2 q4,1 5.8,-1.8 q0.6,-1.8 -1.6,-3.2z" stroke="none"/><path d="M9,220.20000000000002 q2.2,2.8 2.2,4 a2.2,2.2 0 0 1 -4.4,0 q0,-1.2 2.2,-4z" stroke="none"/></g>
<g fill="#dedede"><path d="M11.6,237.6 q2.4,-1.8 4.8,0 q1,1.6 -0.6,3.2 v2.6 h-3.6 v-2.6 q-1.6,-1.6 -0.6,-3.2z"/><rect x="8.2" y="243.79999999999998" width="11.6" height="3" rx="0.8"/><rect x="8.2" y="247.79999999999998" width="11.6" height="1.4"/></g>
<g fill="#dedede" stroke="#dedede"><path d="M14.6,263.5 L20.4,257.7" stroke-width="2" stroke-linecap="round"/><path d="M13.6,263.3 q-2.6,0.4 -2.6,2.8 q0,1.4 -1.8,2.2 q4,1 5.8,-1.8 q0.8,-1.8 -1.4,-3.2z" stroke="none"/><path d="M12.6,259.7 q-3.4,-1.4 -4.6,1.6" fill="none" stroke-width="1" stroke-dasharray="1.4 1"/><path d="M6.8,260.7 l1.2,2.6 l1.8,-2z" stroke="none"/><path d="M18.6,264.3 q1,3 -1.6,4.6" fill="none" stroke-width="0.9" stroke-dasharray="1.2 1"/></g>
<g transform="rotate(-38 16.4 284.40000000000003)"><rect x="11" y="281.6" width="11" height="5.8" rx="1.1" fill="#dedede"/><rect x="11" y="281.6" width="3.8" height="5.8" rx="1.1" fill="#363636" stroke="#dedede" stroke-width="1"/></g><g fill="#dedede"><path d="M13.2,277.20000000000005 l0.7,1.4 1.4,0.7 -1.4,0.7 -0.7,1.4 -0.7,-1.4 -1.4,-0.7 1.4,-0.7z"/><circle cx="9.2" cy="280.0" r="0.9"/><circle cx="8.8" cy="284.40000000000003" r="0.9"/><circle cx="11.2" cy="282.40000000000003" r="0.6"/></g>
<g fill="#dedede" stroke="#dedede"><path d="M9.4,302.6 L14.4,298.0 L20,303.6 L15,308.6 Z" stroke-width="1.1" fill="none"/><path d="M10,303.0 L19.4,303.40000000000003 L15,308.20000000000005 Z" stroke="none"/><path d="M12.2,300.20000000000005 V296.6" stroke-width="1.1"/><path d="M21.4,305.20000000000005 q1.6,2.4 0,3.4 q-1.6,-1 0,-3.4z" stroke="none"/></g>
<path d="M14,318 q4.6,5.4 4.6,8.2 a4.6,4.6 0 0 1 -9.2,0 q0,-2.8 4.6,-8.2z" fill="#dedede"/>
<g fill="#dedede" stroke="#dedede"><circle cx="16" cy="342.4" r="4.2" stroke="none"/><path d="M13,345.4 L8.6,350.0" stroke-width="2.2" stroke-linecap="round"/></g>
<g fill="none" stroke="#dedede" stroke-width="1.2"><path d="M9,370.4 L10.4,364.0 L15.6,360.0 L19.4,363.79999999999995 L15.4,369.0 Z"/><path d="M9,370.4 L13.6,365.79999999999995"/><circle cx="14.4" cy="365.0" r="1" fill="#dedede"/><path d="M16,358.79999999999995 L20.6,363.4" stroke-width="1.6"/></g>
<path d="M8.8,379.09999999999997 H19.2 V382.09999999999997 H18 Q17.8,380.5 16.6,380.5 H15 V389.09999999999997 Q15,389.9 16.4,389.9 V390.9 H11.6 V389.9 Q13,389.9 13,389.09999999999997 V380.5 H11.4 Q10.2,380.5 10,382.09999999999997 H8.8 Z" fill="#dedede"/>
<path d="M11,398.40000000000003 L11,409.2 L13.6,406.8 L15.6,411.2 L17.4,410.40000000000003 L15.4,406.2 L18.8,406.0 Z" fill="#dedede"/>
<rect x="8.4" y="420.20000000000005" width="12" height="8.8" fill="#6a6a6a" stroke="#dedede" stroke-width="1.2"/>
<path d="M10.6,451.4 q-2.6,-3.4 -3.2,-5.2 q0.8,-1.2 2.2,0.4 l0.8,1 v-6.4 q0.9,-1 1.8,0 v-1.4 q0.9,-1 1.8,0 v0.4 q0.9,-1 1.8,0 v1.6 q0.9,-0.8 1.8,0.2 v5.6 q0,2.4 -1.4,3.8z" fill="#dedede"/>
<g fill="none" stroke="#dedede"><circle cx="12.6" cy="464.0" r="4.2" stroke-width="1.5"/><path d="M15.8,467.2 L20,471.4" stroke-width="2.2"/></g>
<g fill="#dedede"><circle cx="9.6" cy="486" r="1.2"/><circle cx="14" cy="486" r="1.2"/><circle cx="18.4" cy="486" r="1.2"/></g>
<rect x="4" y="500" width="4.6" height="4.6" fill="#111" stroke="#dedede" stroke-width="0.8"/><rect x="6.6" y="502.6" width="4.6" height="4.6" fill="#fff" stroke="#222" stroke-width="0.6"/>
<path d="M18.6,501 H22.4 V505" fill="none" stroke="#dedede" stroke-width="1"/><path d="M19.4,499.4 L17.4,501 L19.4,502.6 Z M20.8,504.4 L22.4,506.6 L24,504.4 Z" fill="#dedede"/>
<rect x="11.4" y="521" width="15" height="14" fill="#ffffff" stroke="#3a3a3a" stroke-width="0.8"/>
<rect x="4.2" y="513.4" width="13.6" height="13" fill="#6e7cbd" stroke="#e2e2e2" stroke-width="1"/>
<rect x="8.4" y="544.4" width="12.2" height="9.6" fill="none" stroke="#dedede" stroke-width="1.1"/><circle cx="14.5" cy="549.2" r="2.8" fill="none" stroke="#dedede" stroke-width="0.9" stroke-dasharray="1.2 0.9"/>
<rect x="11.6" y="564" width="9" height="6.6" fill="none" stroke="#dedede" stroke-width="1.1"/><rect x="8" y="567.4" width="9" height="6.6" fill="#535353" stroke="#dedede" stroke-width="1.1"/><path d="M25.6,576 L25.6,573.4 L23,576 Z" fill="#c8c8c8"/></svg>
<div class="abs" style="left:32px;top:797.2px;width:37.4px;height:11.4px;background:#454545"></div>
<div class="abs" style="left:69.4px;top:797.2px;width:141.6px;height:11.4px;background:#4e4e4e"></div>
<span class="t" style="left:34.8px;top:797.2px;font-size:9.62px;color:#e6e6e6;transform:scaleX(0.93);transform-origin:0 50%;">22.18%</span>
<span class="t" style="left:96.4px;top:797.2px;font-size:9.62px;color:#dcdcdc;transform:scaleX(0.93);transform-origin:0 50%;">文档:48.0M/125.0M</span>
<svg class="abs" style="left:200px;top:797px" width="12" height="12" viewBox="200 797 12 12"><path d="M204.6,799.6 L207.6,803 L204.6,806.4" fill="none" stroke="#c0c0c0" stroke-width="1"/></svg>
<div class="abs" style="left:534.5px;top:809px;width:37.5px;height:7px;background:#0c4a80"></div>
</body>
</html>
